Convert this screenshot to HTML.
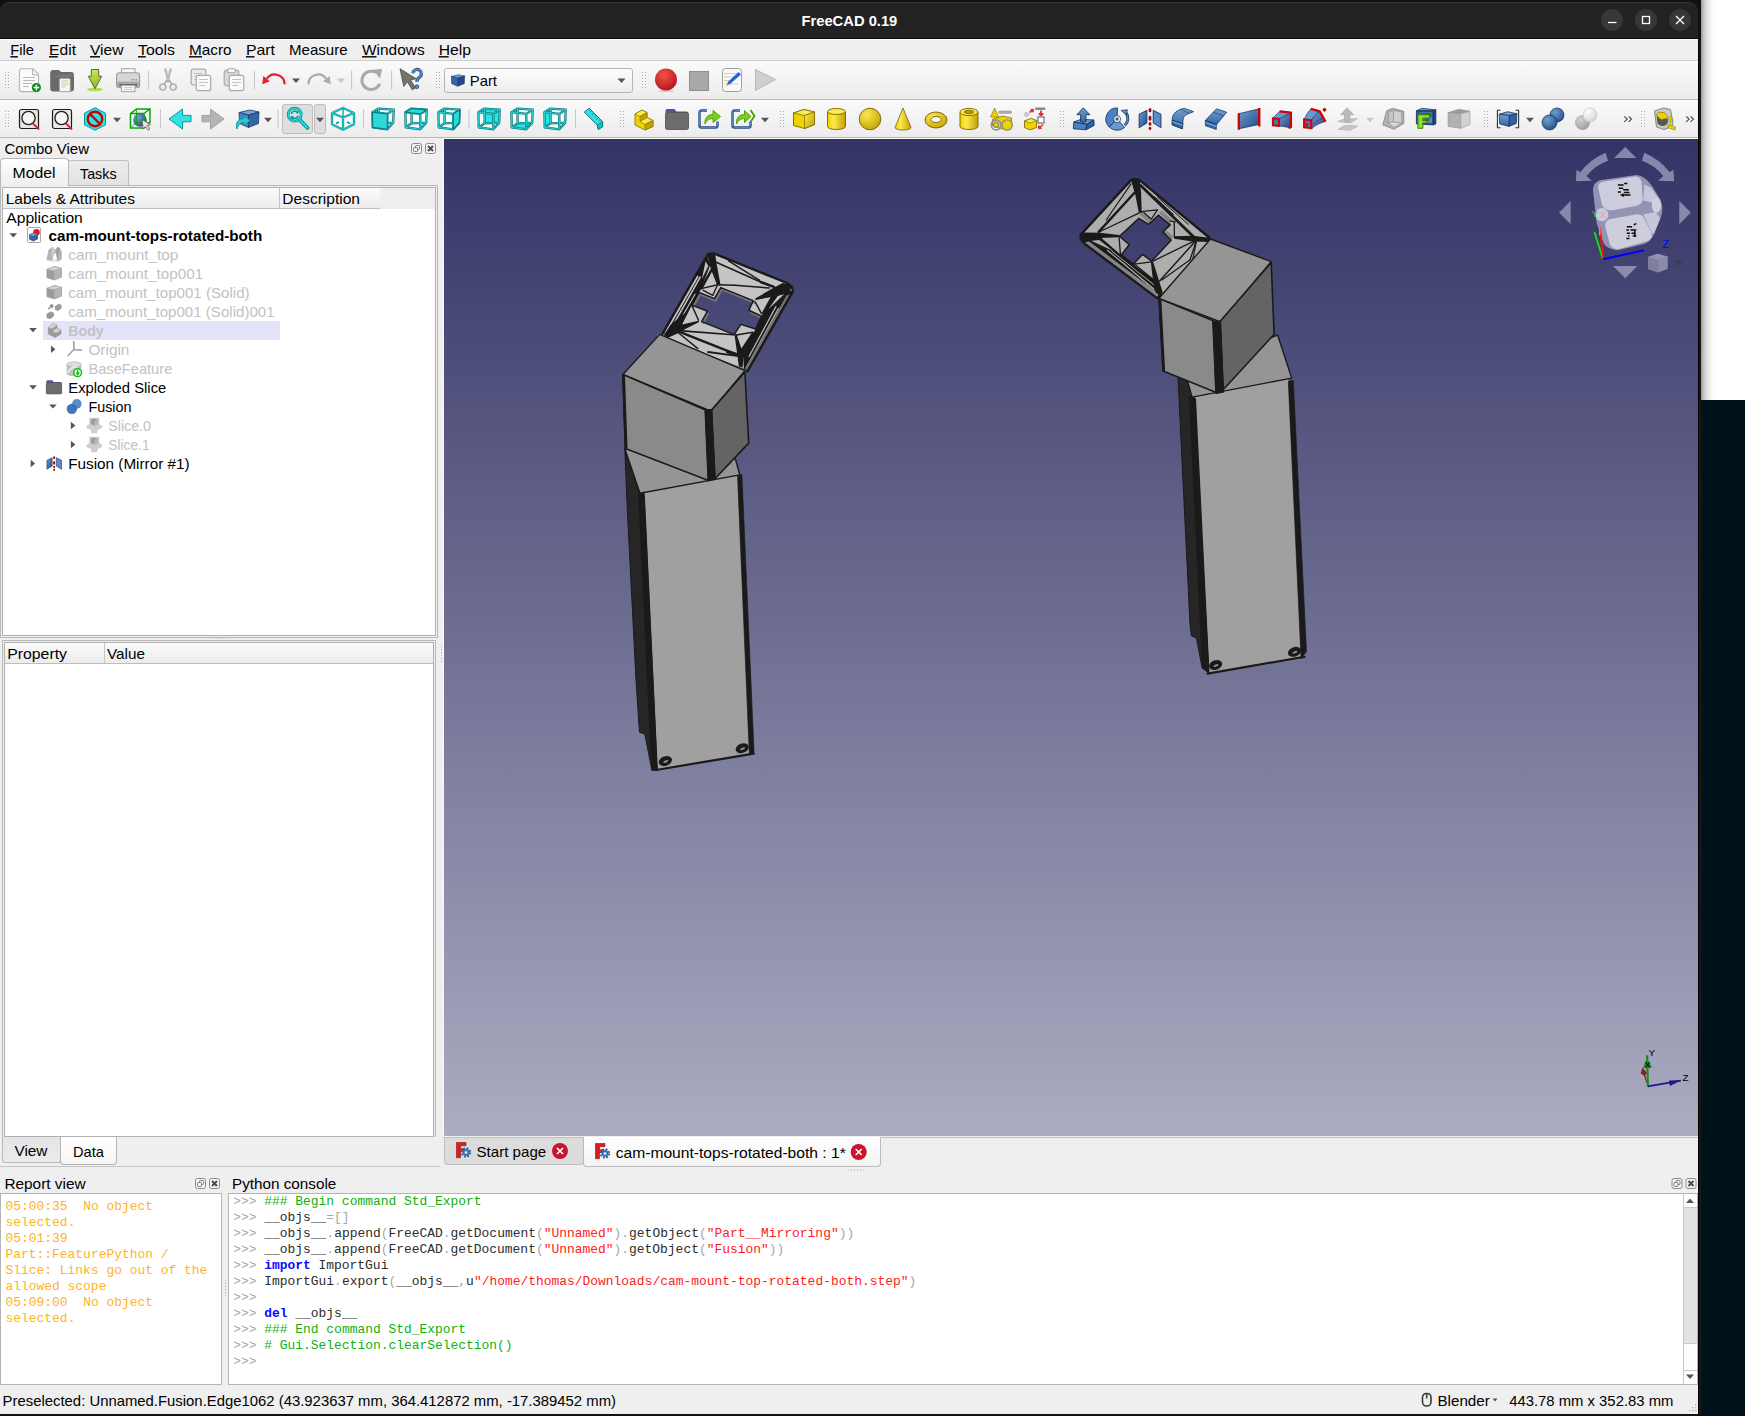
<!DOCTYPE html>
<html lang="en"><head><meta charset="utf-8"><title>FreeCAD 0.19</title>
<style>
html,body{margin:0;padding:0}
body{width:1745px;height:1416px;overflow:hidden;position:relative;background:#00121a;font-family:"Liberation Sans",sans-serif}
.a{position:absolute}
svg{position:absolute;left:0;top:0}
text{font-family:"Liberation Sans",sans-serif}
text.m{font-family:"Liberation Mono",monospace}
</style></head><body>
<div class="a" style="left:1701px;top:0;width:44px;height:400px;background:linear-gradient(to right,#9a9a9a 0,#c9c9c9 3px,#e6e6e6 7px,#f8f8f8 11px,#fff 16px)"></div>
<div class="a" style="left:1701px;top:400px;width:44px;height:1016px;background:#00121a"></div>
<div class="a" style="left:1698px;top:0;width:3px;height:1416px;background:#181815"></div>
<div class="a" style="left:1698px;top:0;width:1px;height:1416px;background:#000"></div>
<div class="a" style="left:0;top:0;width:1701px;height:40px;background:#111"></div>
<div class="a" style="left:0;top:2px;width:1698px;height:36px;background:#222;border-radius:10px 10px 0 0;box-shadow:inset 0 1px 0 #343434"></div>
<div class="a" style="left:0;top:38px;width:1698px;height:1px;background:#0a0a0a"></div>
<div class="a" style="left:1601px;top:9px;width:22px;height:22px;border-radius:11px;background:#373737"></div>
<div class="a" style="left:1635px;top:9px;width:22px;height:22px;border-radius:11px;background:#373737"></div>
<div class="a" style="left:1669px;top:9px;width:22px;height:22px;border-radius:11px;background:#373737"></div>
<div class="a" style="left:0;top:39px;width:1698px;height:1375px;background:#efefef"></div>
<div class="a" style="left:0;top:39px;width:1698px;height:1px;background:#fbfbfb"></div>
<div class="a" style="left:0;top:1414px;width:1701px;height:2px;background:#111"></div>
<div class="a" style="left:0;top:60px;width:1698px;height:1px;background:#cfcfcf"></div>
<div class="a" style="left:0;top:61px;width:1698px;height:38px;background:linear-gradient(#fafafa,#ececec)"></div>
<div class="a" style="left:0;top:99px;width:1698px;height:1px;background:#b9b9b9"></div>
<div class="a" style="left:0;top:100px;width:1698px;height:37px;background:linear-gradient(#fafafa,#ececec)"></div>
<div class="a" style="left:0;top:137px;width:1698px;height:1px;background:#b9b9b9"></div>
<div class="a" style="left:444px;top:68px;width:189px;height:25px;box-sizing:border-box;border:1px solid #b4b4b4;border-radius:3px;background:linear-gradient(#fdfdfd,#ededed)"></div>
<div class="a" style="left:282px;top:104px;width:31px;height:30px;box-sizing:border-box;border:1px solid #bdbdbd;border-radius:3px;background:#dedede"></div>
<div class="a" style="left:314px;top:104px;width:12px;height:30px;box-sizing:border-box;border:1px solid #bdbdbd;border-radius:3px;background:#dedede"></div>
<div class="a" style="left:0px;top:185px;width:438px;height:453px;box-sizing:border-box;border:1px solid #b9b9b9;background:#efefef"></div>
<div class="a" style="left:68px;top:160px;width:61px;height:25px;box-sizing:border-box;border:1px solid #bfbfbf;border-bottom:none;border-radius:3px 3px 0 0;background:linear-gradient(#ececec,#e2e2e2)"></div>
<div class="a" style="left:0px;top:158px;width:69px;height:28px;box-sizing:border-box;border:1px solid #b9b9b9;border-bottom:none;border-radius:4px 4px 0 0;background:linear-gradient(#fff,#f3f3f3 60%,#efefef)"></div>
<div class="a" style="left:2px;top:187px;width:434px;height:449px;box-sizing:border-box;border:1px solid #b0b0b0;background:#fff"></div>
<div class="a" style="left:3px;top:188px;width:432px;height:21px;background:#efefef"></div>
<div class="a" style="left:3px;top:188px;width:377px;height:21px;box-sizing:border-box;border-bottom:1px solid #bdbdbd;background:linear-gradient(#fbfbfb,#ececec)"></div>
<div class="a" style="left:279px;top:188px;width:1px;height:20px;background:#c4c4c4"></div>
<div class="a" style="left:43px;top:321px;width:237px;height:19px;background:#e3e3fa"></div>
<div class="a" style="left:2px;top:640px;width:434px;height:497px;box-sizing:border-box;border:1px solid #b9b9b9;border-bottom:none;background:#efefef"></div>
<div class="a" style="left:4px;top:642px;width:430px;height:495px;box-sizing:border-box;border:1px solid #b0b0b0;background:#fff"></div>
<div class="a" style="left:5px;top:643px;width:428px;height:21px;box-sizing:border-box;border-bottom:1px solid #bdbdbd;background:linear-gradient(#fbfbfb,#ececec)"></div>
<div class="a" style="left:104px;top:643px;width:1px;height:20px;background:#c4c4c4"></div>
<div class="a" style="left:2px;top:1137px;width:59px;height:26px;box-sizing:border-box;border:1px solid #b8b8b8;border-top:none;border-radius:0 0 3px 3px;background:linear-gradient(#e4e4e4,#ebebeb)"></div>
<div class="a" style="left:60px;top:1137px;width:57px;height:28px;box-sizing:border-box;border:1px solid #b4b4b4;border-top:none;border-radius:0 0 4px 4px;background:linear-gradient(#fff,#f6f6f6)"></div>
<div class="a" style="left:0;top:1166px;width:440px;height:1px;background:#c6c6c6"></div>
<div class="a" style="left:443px;top:138px;width:1255px;height:998px;background:#fbfbf8"></div>
<div class="a" style="left:444px;top:139px;width:1254px;height:997px;background:linear-gradient(#333366,#ababc1)"></div>
<div class="a" style="left:443px;top:1137px;width:1255px;height:1px;background:#c0c0c0"></div>
<div class="a" style="left:444px;top:1138px;width:140px;height:27px;box-sizing:border-box;border:1px solid #bdbdbd;border-top:none;border-radius:0 0 4px 4px;background:#dcdcdc"></div>
<div class="a" style="left:583px;top:1137px;width:298px;height:30px;box-sizing:border-box;border:1px solid #bdbdbd;border-top:none;border-radius:0 0 4px 4px;background:linear-gradient(#fff,#f4f4f4)"></div>
<div class="a" style="left:0px;top:1193px;width:222px;height:192px;box-sizing:border-box;border:1px solid #b4b4b4;background:#fff"></div>
<div class="a" style="left:228px;top:1193px;width:1470px;height:192px;box-sizing:border-box;border:1px solid #b4b4b4;background:#fff"></div>
<div class="a" style="left:1683px;top:1194px;width:14px;height:190px;box-sizing:border-box;border-left:1px solid #c8c8c8;background:#fdfdfd"></div>
<div class="a" style="left:1684px;top:1207px;width:13px;height:137px;box-sizing:border-box;border-top:1px solid #c8c8c8;border-bottom:1px solid #c8c8c8;background:#e2e2e2"></div>
<div class="a" style="left:1684px;top:1370px;width:13px;height:1px;background:#c8c8c8"></div>
<svg width="1745" height="1416" viewBox="0 0 1745 1416">
<g id="models"><polygon points="624.8,449 627.3,510 636,680 638.8,722.7 639.6,732.3 644.8,734.1 651.9,770.3 657.6,770 646,490 640,480" fill="#262626" stroke="#1a1a1a" stroke-width="1" stroke-linejoin="round"/>
<polygon points="644.3,490 737.7,470 749.8,754 657.6,769.5" fill="#a0a0a0"/>
<polygon points="638.1,492.5 644.8,494.6 657.8,770 651.2,770.3" fill="#1a1a1a"/>
<polygon points="737.5,475 741.9,474.3 754.1,753.2 749.3,754.4" fill="#1a1a1a" stroke="#1a1a1a" stroke-width="0.6" stroke-linejoin="round"/>
<line x1="656" y1="770" x2="753.6" y2="753.6" stroke="#1a1a1a" stroke-width="2.2" stroke-linecap="round"/>
<ellipse cx="665.4" cy="761" rx="6.8" ry="4.7" fill="#1a1a1a" transform="rotate(-20 665.4 761)"/>
<ellipse cx="665.6" cy="761.6" rx="2.6" ry="1.1" fill="#8f8f8f" transform="rotate(-20 665.4 761)"/>
<ellipse cx="742.2" cy="748.2" rx="6.8" ry="4.7" fill="#1a1a1a" transform="rotate(-20 742.2 748.2)"/>
<ellipse cx="742.4" cy="748.8" rx="2.6" ry="1.1" fill="#8f8f8f" transform="rotate(-20 742.2 748.2)"/>
<polygon points="624.8,448.8 735.4,459 739.8,474.9 640,493.3" fill="#959595" stroke="#1a1a1a" stroke-width="1.4" stroke-linejoin="round"/>
<path d="M706.9 255.8 L709.3 253.6 L714.3 253.6 L787.0 283.0 L791.9 287.0 L792.9 291.4 L747.4 371.5 L743.9 368.6 L656.9 334.9 L662.4 333.9 Z M720.8 287.6 L753.2 300.6 L748.9 310.2 L761.5 316.1 L755.6 329.0 L740.8 324.4 L734.1 334.6 L701.6 321.6 L707.4 311.3 L692.0 305.1 L699.1 292.4 L714.5 298.6 Z" fill="#c4c4c4" fill-rule="evenodd"/>
<polygon points="720.8,287.6 753.2,300.6 755.4,304.2 722.9,291.1" fill="#747474"/>
<polygon points="714.5,298.6 720.8,287.6 722.5,290.4 716.3,301.5" fill="#747474"/>
<polygon points="692.0,305.1 699.1,292.4 700.9,295.3 693.8,307.9" fill="#747474"/>
<polygon points="701.6,321.6 707.4,311.3 709.1,314.1 703.4,324.4" fill="#747474"/>
<polygon points="699.1,292.4 714.5,298.6 716.7,302.2 701.3,296.0" fill="#747474"/>
<polygon points="748.9,310.2 761.5,316.1 763.7,319.7 751.1,313.8" fill="#747474"/>
<path d="M720.8 287.6 L753.2 300.6 L748.9 310.2 L761.5 316.1 L755.6 329.0 L740.8 324.4 L734.1 334.6 L701.6 321.6 L707.4 311.3 L692.0 305.1 L699.1 292.4 L714.5 298.6 Z" fill="none" stroke="#1a1a1a" stroke-width="1.5" stroke-linejoin="round" stroke-linecap="round"/>
<polygon points="706.9,255.8 710.3,264.7 701.4,288.5 699.1,292.4 692.0,305.1 679.7,329.0 662.4,333.9" fill="#1a1a1a"/>
<polygon points="792.4,291.4 788.4,289.4 772.6,295.4 761.5,316.1 755.6,329.0 743.0,351.7 743.9,368.6 747.4,371.5" fill="#1a1a1a"/>
<polygon points="705.6,261.3 708.3,265.9 701.9,279.1" fill="#c4c4c4"/>
<line x1="697.9" y1="276.1" x2="665.4" y2="332.8" stroke="#c4c4c4" stroke-width="1.98" stroke-linecap="butt"/>
<line x1="700.5" y1="276.7" x2="673.9" y2="323.7" stroke="#c4c4c4" stroke-width="1.54" stroke-linecap="butt"/>
<line x1="695.3" y1="293.7" x2="681.5" y2="317.7" stroke="#c4c4c4" stroke-width="1.1" stroke-linecap="butt"/>
<polygon points="778.0,295.8 785.5,293.0 768.5,309.0" fill="#c4c4c4"/>
<line x1="776.1" y1="306.3" x2="748.9" y2="356.7" stroke="#c4c4c4" stroke-width="1.21" stroke-linecap="butt"/>
<line x1="778.6" y1="308.2" x2="746.4" y2="367.6" stroke="#c4c4c4" stroke-width="1.21" stroke-linecap="butt"/>
<line x1="773.6" y1="323.1" x2="749.9" y2="367.6" stroke="#c4c4c4" stroke-width="1.1" stroke-linecap="butt"/>
<polygon points="786.5,295.6 790.2,294.2 748.9,370.3 744.9,368.6" fill="#747474"/>
<path d="M662.4 333.9 L706.9 255.8 L709.3 253.6 L714.3 253.6 L787.0 283.0 L791.9 287.0 L792.9 291.4 L747.4 371.5" fill="none" stroke="#1a1a1a" stroke-width="2.4" stroke-linejoin="round" stroke-linecap="round"/>
<polygon points="707.0,253.5 715.2,254.3 716.5,263.3 720.6,285.3 717.2,285.3 710.8,269.0" fill="#1a1a1a"/>
<line x1="716.2" y1="262.3" x2="761.2" y2="282.2" stroke="#1a1a1a" stroke-width="1.5" stroke-linecap="round"/>
<line x1="761.2" y1="282.2" x2="773.8" y2="286.9" stroke="#1a1a1a" stroke-width="2.6" stroke-linecap="round"/>
<line x1="728.5" y1="260.8" x2="759.7" y2="280.4" stroke="#1a1a1a" stroke-width="1.4" stroke-linecap="round"/>
<line x1="701.0" y1="288.6" x2="717.7" y2="284.8" stroke="#1a1a1a" stroke-width="1.4" stroke-linecap="round"/>
<line x1="717.7" y1="284.8" x2="734.8" y2="285.3" stroke="#1a1a1a" stroke-width="1.4" stroke-linecap="round"/>
<line x1="734.8" y1="285.3" x2="769.4" y2="288.0" stroke="#1a1a1a" stroke-width="1.5" stroke-linecap="round"/>
<line x1="702.9" y1="290.1" x2="712.7" y2="295.4" stroke="#1a1a1a" stroke-width="1.3" stroke-linecap="round"/>
<line x1="717.1" y1="286.0" x2="712.7" y2="295.4" stroke="#1a1a1a" stroke-width="1.3" stroke-linecap="round"/>
<line x1="711.4" y1="270.2" x2="701.7" y2="287.9" stroke="#1a1a1a" stroke-width="2.4" stroke-linecap="round"/>
<polygon points="791.5,286.6 789.3,293.2 777.9,295.7 755.6,300.0 755.2,298.6 771.3,289.1 782.7,283.1 789.0,284.1" fill="#1a1a1a"/>
<line x1="754.9" y1="301.4" x2="761.5" y2="313.7" stroke="#1a1a1a" stroke-width="1.4" stroke-linecap="round"/>
<line x1="772.6" y1="295.4" x2="763.1" y2="312.8" stroke="#1a1a1a" stroke-width="2.0" stroke-linecap="round"/>
<polygon points="681.5,315.8 670.8,324.6 663.8,335.3 667.6,337.9 679.0,332.8 685.3,329.0 699.1,322.1 698.5,320.8 682.1,324.6 687.8,310.8" fill="#1a1a1a"/>
<line x1="692.2" y1="306.0" x2="698.5" y2="320.2" stroke="#1a1a1a" stroke-width="1.5" stroke-linecap="round"/>
<line x1="682.1" y1="330.9" x2="736.3" y2="335.0" stroke="#1a1a1a" stroke-width="1.6" stroke-linecap="round"/>
<line x1="736.3" y1="335.0" x2="752.7" y2="332.2" stroke="#1a1a1a" stroke-width="1.5" stroke-linecap="round"/>
<line x1="680.2" y1="332.2" x2="737.6" y2="354.9" stroke="#1a1a1a" stroke-width="2.4" stroke-linecap="round"/>
<line x1="678.3" y1="332.8" x2="697.9" y2="348.6" stroke="#1a1a1a" stroke-width="1.4" stroke-linecap="round"/>
<line x1="708.0" y1="352.0" x2="736.9" y2="355.8" stroke="#1a1a1a" stroke-width="1.8" stroke-linecap="round"/>
<line x1="727.5" y1="351.7" x2="737.6" y2="354.9" stroke="#1a1a1a" stroke-width="3.2" stroke-linecap="round"/>
<polygon points="734.7,336.0 736.9,335.3 741.4,348.6 752.1,332.2 754.6,332.8 743.3,358.0 742.6,367.5 738.8,366.2 736.9,351.7" fill="#1a1a1a"/>
<polygon points="659.7,334.4 744.9,370.7 711.9,410 706.8,409.5 622.9,374.5" fill="#959595" stroke="#1a1a1a" stroke-width="1.4" stroke-linejoin="round"/>
<polygon points="622.9,374.5 705.5,410 708.5,480.5 625.4,448.5" fill="#8a8a8a" stroke="#1a1a1a" stroke-width="1.4" stroke-linejoin="round"/>
<polygon points="711.5,410.1 744.9,372 748.7,443.1 715,478.7" fill="#646464" stroke="#1a1a1a" stroke-width="1.6" stroke-linejoin="round"/>
<polygon points="704.9,409.4 711.9,410.1 715,479.4 708,480.8" fill="#1a1a1a" stroke="#1a1a1a" stroke-width="1" stroke-linejoin="round"/>
<line x1="623.5" y1="376" x2="626" y2="448" stroke="#1a1a1a" stroke-width="3" stroke-linecap="round"/>
<polygon points="1178,378 1190,624.2 1191.4,636 1196.5,638.2 1202,667.4 1209.3,673.4 1197,394 1193,374" fill="#262626" stroke="#1a1a1a" stroke-width="1" stroke-linejoin="round"/>
<polygon points="1194.6,394 1288.3,376 1301.7,659 1209.3,673.4" fill="#a0a0a0"/>
<polygon points="1188.8,396 1196,398.4 1209.5,673.6 1202,668.4" fill="#1a1a1a"/>
<polygon points="1288.3,381.3 1293.3,380.6 1306.5,651.5 1301,658.8" fill="#1a1a1a" stroke="#1a1a1a" stroke-width="0.6" stroke-linejoin="round"/>
<line x1="1207.5" y1="673.6" x2="1304.5" y2="656.8" stroke="#1a1a1a" stroke-width="2.2" stroke-linecap="round"/>
<ellipse cx="1215.6" cy="665" rx="6.8" ry="4.7" fill="#1a1a1a" transform="rotate(-20 1215.6 665)"/>
<ellipse cx="1215.8" cy="665.6" rx="2.6" ry="1.1" fill="#8f8f8f" transform="rotate(-20 1215.6 665)"/>
<ellipse cx="1294.5" cy="651.8" rx="6.8" ry="4.7" fill="#1a1a1a" transform="rotate(-20 1294.5 651.8)"/>
<ellipse cx="1294.7" cy="652.4" rx="2.6" ry="1.1" fill="#8f8f8f" transform="rotate(-20 1294.5 651.8)"/>
<polygon points="1185.1,372.4 1277.6,335.0 1291.7,378.1 1192.1,397.1" fill="#959595" stroke="#1a1a1a" stroke-width="1.4" stroke-linejoin="round"/>
<path d="M1131.0 180.1 L1134.5 179.2 L1138.9 179.6 L1209.5 237.8 L1210.4 242.1 L1160.5 295.5 L1157.0 298.1 L1084.2 243.4 L1080.6 238.6 L1080.8 234.6 Z M1119.5 236.3 L1138.9 218.3 L1148.6 224.4 L1158.3 215.2 L1170.2 224.9 L1162.7 231.9 L1171.1 240.3 L1151.7 261.1 L1142.4 254.4 L1133.2 264.2 L1121.3 254.9 L1129.2 244.7 Z" fill="#aeaeae" fill-rule="evenodd"/>
<polygon points="1139.4,214.4 1141.9,211.9 1152.0,219.3 1149.1,223.4" fill="#868686"/>
<polygon points="1159.0,213.1 1161.9,210.5 1172.3,220.0 1170.0,223.7" fill="#868686"/>
<polygon points="1162.2,231.8 1164.9,229.0 1173.2,236.6 1170.7,240.5" fill="#868686"/>
<path d="M1119.5 236.3 L1138.9 218.3 L1148.6 224.4 L1158.3 215.2 L1170.2 224.9 L1162.7 231.9 L1171.1 240.3 L1151.7 261.1 L1142.4 254.4 L1133.2 264.2 L1121.3 254.9 L1129.2 244.7 Z" fill="none" stroke="#1a1a1a" stroke-width="1.5" stroke-linejoin="round" stroke-linecap="round"/>
<polygon points="1083.3,236.8 1100.1,236.8 1120.4,254.4 1133.2,264.2 1153.0,279.2 1160.5,295.5 1157.0,298.1 1083.3,243.0" fill="#1a1a1a"/>
<polygon points="1091.2,240.8 1099.2,239.9 1113.3,250.9" fill="#aeaeae"/>
<line x1="1107.1" y1="250.0" x2="1153.9" y2="288.9" stroke="#aeaeae" stroke-width="1.1" stroke-linecap="butt"/>
<line x1="1111.5" y1="250.9" x2="1155.7" y2="286.2" stroke="#aeaeae" stroke-width="0.99" stroke-linecap="butt"/>
<line x1="1119.5" y1="259.7" x2="1156.6" y2="292.4" stroke="#aeaeae" stroke-width="0.99" stroke-linecap="butt"/>
<polygon points="1083.5,242.8 1087.9,240.5 1159.0,293.7 1156.6,298.6" fill="#868686"/>
<polygon points="1135.4,263.7 1142.9,255.8 1150.4,261.9" fill="#aeaeae"/>
<polygon points="1135.4,265.9 1150.8,263.7 1151.7,276.5" fill="#aeaeae"/>
<line x1="1140.7" y1="185.6" x2="1195.4" y2="238.6" stroke="#1a1a1a" stroke-width="2.8" stroke-linecap="round"/>
<line x1="1153.9" y1="196.6" x2="1173.3" y2="214.7" stroke="#1a1a1a" stroke-width="1.2" stroke-linecap="round"/>
<line x1="1157.4" y1="197.1" x2="1188.3" y2="224.4" stroke="#1a1a1a" stroke-width="1.0" stroke-linecap="round"/>
<polygon points="1131.0,180.1 1134.5,179.2 1139.8,179.6 1141.1,192.7 1141.7,213.0 1138.9,213.0 1135.4,195.3" fill="#1a1a1a"/>
<line x1="1131.0" y1="183.8" x2="1106.2" y2="220.0" stroke="#1a1a1a" stroke-width="1.2" stroke-linecap="round"/>
<line x1="1134.5" y1="192.7" x2="1098.7" y2="231.9" stroke="#1a1a1a" stroke-width="2.4" stroke-linecap="round"/>
<polygon points="1080.8,234.6 1083.3,232.4 1100.1,232.8 1119.0,235.0 1119.0,237.2 1100.1,238.1 1083.3,243.0 1080.6,238.6" fill="#1a1a1a"/>
<line x1="1100.1" y1="231.5" x2="1138.9" y2="213.1" stroke="#1a1a1a" stroke-width="1.3" stroke-linecap="round"/>
<line x1="1119.0" y1="235.9" x2="1120.4" y2="254.4" stroke="#1a1a1a" stroke-width="1.3" stroke-linecap="round"/>
<line x1="1140.7" y1="211.6" x2="1157.4" y2="209.9" stroke="#1a1a1a" stroke-width="1.3" stroke-linecap="round"/>
<line x1="1143.8" y1="212.5" x2="1150.8" y2="218.7" stroke="#1a1a1a" stroke-width="1.2" stroke-linecap="round"/>
<line x1="1157.4" y1="209.9" x2="1151.3" y2="219.1" stroke="#1a1a1a" stroke-width="1.2" stroke-linecap="round"/>
<line x1="1174.2" y1="221.8" x2="1174.4" y2="236.8" stroke="#1a1a1a" stroke-width="1.3" stroke-linecap="round"/>
<line x1="1170.2" y1="220.9" x2="1175.1" y2="221.8" stroke="#1a1a1a" stroke-width="1.3" stroke-linecap="round"/>
<polygon points="1173.8,236.3 1192.7,235.7 1209.5,237.8 1210.4,242.1 1192.7,241.4 1174.2,238.7" fill="#1a1a1a"/>
<line x1="1194.5" y1="240.8" x2="1153.0" y2="261.1" stroke="#1a1a1a" stroke-width="1.3" stroke-linecap="round"/>
<line x1="1195.4" y1="241.2" x2="1159.6" y2="280.9" stroke="#1a1a1a" stroke-width="1.5" stroke-linecap="round"/>
<line x1="1195.8" y1="242.1" x2="1190.1" y2="259.7" stroke="#1a1a1a" stroke-width="1.3" stroke-linecap="round"/>
<line x1="1196.3" y1="242.1" x2="1192.7" y2="259.7" stroke="#1a1a1a" stroke-width="1.2" stroke-linecap="round"/>
<line x1="1190.1" y1="259.7" x2="1161.9" y2="280.0" stroke="#1a1a1a" stroke-width="1.2" stroke-linecap="round"/>
<polygon points="1150.8,261.9 1153.0,261.5 1162.7,292.4 1160.1,295.5 1155.7,292.4 1153.0,280.0" fill="#1a1a1a"/>
<line x1="1134.5" y1="264.2" x2="1151.3" y2="261.9" stroke="#1a1a1a" stroke-width="1.3" stroke-linecap="round"/>
<line x1="1135.4" y1="265.0" x2="1153.0" y2="279.2" stroke="#1a1a1a" stroke-width="1.4" stroke-linecap="round"/>
<path d="M1160.5 295.5 L1157.0 298.1 L1084.2 243.4 L1080.6 238.6 L1080.8 234.6 L1131.0 180.1 L1134.5 179.2 L1138.9 179.6 L1209.5 237.8" fill="none" stroke="#1a1a1a" stroke-width="2.4" stroke-linejoin="round" stroke-linecap="round"/>
<polygon points="1210.5,239.0 1271.2,261.6 1220.7,321.6 1216.2,320.2 1159.0,298.3" fill="#959595" stroke="#1a1a1a" stroke-width="1.4" stroke-linejoin="round"/>
<polygon points="1159.0,298.7 1213.3,320.9 1216.2,392.5 1163.2,371.0" fill="#8a8a8a" stroke="#1a1a1a" stroke-width="1.4" stroke-linejoin="round"/>
<polygon points="1220.0,321.6 1271.2,262.5 1274.1,334.3 1223.2,389.7" fill="#646464" stroke="#1a1a1a" stroke-width="1.6" stroke-linejoin="round"/>
<polygon points="1212.6,320.9 1220.7,321.6 1223.5,392.2 1215.7,393.6" fill="#1a1a1a" stroke="#1a1a1a" stroke-width="1" stroke-linejoin="round"/>
<line x1="1159.9" y1="300.4" x2="1163.6" y2="370.3" stroke="#1a1a1a" stroke-width="3.0" stroke-linecap="round"/></g>
<g id="icons"><defs>
<linearGradient id="gY" x1="0" y1="0" x2="1" y2="1"><stop offset="0" stop-color="#fce94f"/><stop offset="1" stop-color="#c4a000"/></linearGradient>
<linearGradient id="gYv" x1="0" y1="0" x2="1" y2="0"><stop offset="0" stop-color="#edd400"/><stop offset="0.35" stop-color="#fce94f"/><stop offset="1" stop-color="#c4a000"/></linearGradient>
<linearGradient id="gB" x1="0" y1="0" x2="1" y2="1"><stop offset="0" stop-color="#729fcf"/><stop offset="1" stop-color="#204a87"/></linearGradient>
<linearGradient id="gB2" x1="0" y1="0" x2="0" y2="1"><stop offset="0" stop-color="#729fcf"/><stop offset="1" stop-color="#3465a4"/></linearGradient>
<linearGradient id="gG" x1="0" y1="0" x2="0" y2="1"><stop offset="0" stop-color="#d3d7cf"/><stop offset="1" stop-color="#888a85"/></linearGradient>
<linearGradient id="gGr" x1="0" y1="0" x2="0" y2="1"><stop offset="0" stop-color="#c8e85a"/><stop offset="1" stop-color="#8ab81f"/></linearGradient>
<radialGradient id="gR" cx="0.4" cy="0.3" r="0.8"><stop offset="0" stop-color="#f0553f"/><stop offset="1" stop-color="#b00d23"/></radialGradient>
<radialGradient id="gYs" cx="0.35" cy="0.3" r="0.8"><stop offset="0" stop-color="#fce94f"/><stop offset="1" stop-color="#c4a000"/></radialGradient>
<radialGradient id="gBs" cx="0.35" cy="0.3" r="0.8"><stop offset="0" stop-color="#729fcf"/><stop offset="1" stop-color="#204a87"/></radialGradient>
<radialGradient id="gWs" cx="0.35" cy="0.3" r="0.8"><stop offset="0" stop-color="#ffffff"/><stop offset="1" stop-color="#d0d0d0"/></radialGradient>
<radialGradient id="gGs" cx="0.35" cy="0.3" r="0.8"><stop offset="0" stop-color="#d0d0d0"/><stop offset="1" stop-color="#9a9a9a"/></radialGradient>
</defs>
<rect x="5.6" y="72.6" width="1" height="1" fill="#fff"/><rect x="5" y="72" width="1" height="1" fill="#ababab"/><rect x="8.6" y="72.6" width="1" height="1" fill="#fff"/><rect x="8" y="72" width="1" height="1" fill="#ababab"/><rect x="5.6" y="75.6" width="1" height="1" fill="#fff"/><rect x="5" y="75" width="1" height="1" fill="#ababab"/><rect x="8.6" y="75.6" width="1" height="1" fill="#fff"/><rect x="8" y="75" width="1" height="1" fill="#ababab"/><rect x="5.6" y="78.6" width="1" height="1" fill="#fff"/><rect x="5" y="78" width="1" height="1" fill="#ababab"/><rect x="8.6" y="78.6" width="1" height="1" fill="#fff"/><rect x="8" y="78" width="1" height="1" fill="#ababab"/><rect x="5.6" y="81.6" width="1" height="1" fill="#fff"/><rect x="5" y="81" width="1" height="1" fill="#ababab"/><rect x="8.6" y="81.6" width="1" height="1" fill="#fff"/><rect x="8" y="81" width="1" height="1" fill="#ababab"/><rect x="5.6" y="84.6" width="1" height="1" fill="#fff"/><rect x="5" y="84" width="1" height="1" fill="#ababab"/><rect x="8.6" y="84.6" width="1" height="1" fill="#fff"/><rect x="8" y="84" width="1" height="1" fill="#ababab"/><rect x="5.6" y="87.6" width="1" height="1" fill="#fff"/><rect x="5" y="87" width="1" height="1" fill="#ababab"/><rect x="8.6" y="87.6" width="1" height="1" fill="#fff"/><rect x="8" y="87" width="1" height="1" fill="#ababab"/>
<g transform="translate(17,68) scale(1)"><path d="M4.500 0.800h11.500l5.500 5.500v15.300a2 2 0 0 1-2 2h-15a2 2 0 0 1-2-2v-18.800a2 2 0 0 1 2-2z" fill="#fbfbfb" stroke="#b4b4b4" stroke-width="1.100"/><path d="M15.500 1v4a2 2 0 0 0 2 2h4" fill="#f1f1ee" stroke="#b4b4b4" stroke-width="1.100"/><path d="M6 9.500h12M6 12.500h12M6 15.500h9" stroke="#b9b9b9" stroke-width="1.100"/><path d="M6 18.500h6" stroke="#b9b9b9" stroke-width="1.100"/><circle cx="19.400" cy="19.500" r="4.600" fill="#0f8a1f"/><path d="M19.400 16.700v5.600M16.600 19.500h5.600" stroke="#fff" stroke-width="1.500"/></g>
<g transform="translate(50,68) scale(1)"><path d="M0.200 5a3 3 0 0 1 3-3h5.500l2.500 2h9.800a3 3 0 0 1 3 3v13.400a3 3 0 0 1-3 3h-17.800a3 3 0 0 1-3-3z" fill="#6a6a6a"/><path d="M0.600 9.500c2-2 6-1 9-3h14v2.500h-23z" fill="#7a7a7a"/><rect x="9.300" y="10.300" width="11" height="13.400" rx="1.500" fill="#f6f6f4" stroke="#9a9a9a" stroke-width="0.900"/><path d="M11.300 12.700h7M11.300 14.800h7M11.300 16.900h7M11.300 19h4" stroke="#cfc6a8" stroke-width="0.900"/></g>
<g transform="translate(83,68) scale(1)"><ellipse cx="12" cy="21.500" rx="8" ry="1.800" fill="#b4dc4c"/><path d="M8.300 1.500h7.400v6.800h3l-6.700 12.500-6.700-12.500h3z" fill="url(#gGr)" stroke="#4f5e22" stroke-width="0.900" stroke-linejoin="round"/></g>
<g transform="translate(116,68) scale(1)"><rect x="5.500" y="0.700" width="13.400" height="8" fill="#fbfbf9" stroke="#a8a8a8" stroke-width="1.100"/><rect x="0.600" y="4.800" width="23" height="15" rx="3" fill="#d6d6d6" stroke="#9a9a9a" stroke-width="1.100"/><path d="M1.200 13.500h21.800v3.500a2.400 2.400 0 0 1-2.400 2.400h-17a2.400 2.400 0 0 1-2.400-2.400z" fill="#a9a9a9"/><rect x="3.500" y="16.300" width="17.500" height="1.300" fill="#3a3a3a"/><rect x="5.500" y="17.300" width="13.400" height="6.300" fill="#fbfbf9" stroke="#a8a8a8" stroke-width="1.100"/><path d="M8 19.400h8.500M8 21.400h8.500" stroke="#c4c4c4"/><circle cx="16.300" cy="11.700" r="0.800" fill="#ee4a5a"/><circle cx="18.400" cy="11.700" r="0.800" fill="#f07a40"/><circle cx="20.500" cy="11.700" r="0.800" fill="#4ac04a"/></g>
<g transform="translate(156,68) scale(1)"><path d="M9.5 1.5l3 12M14.5 1.5l-3 12" stroke="#b9b9b9" stroke-width="2.4" stroke-linecap="round"/><path d="M11 12l-3.5 5M13 12l3.5 5" stroke="#b0b0b0" stroke-width="1.6"/><circle cx="6.8" cy="19" r="3" fill="none" stroke="#b0b0b0" stroke-width="1.6"/><circle cx="17.2" cy="19" r="3" fill="none" stroke="#b0b0b0" stroke-width="1.6"/></g>
<g transform="translate(189,68) scale(1)"><rect x="2.200" y="1.200" width="14.600" height="15.800" rx="2" fill="#ececec" stroke="#a9a9a9" stroke-width="1.200"/><path d="M5 5.500h9M5 8.500h3M5 11.500h3" stroke="#c4c4c4"/><rect x="7.300" y="7.300" width="14.400" height="15.300" rx="2" fill="#fafafa" stroke="#a9a9a9" stroke-width="1.200"/><path d="M10.200 11.500h8.800M10.200 14.500h8.800M10.200 17.500h5.800" stroke="#c0c0c0"/></g>
<g transform="translate(222,68) scale(1)"><rect x="2.200" y="2.200" width="14.600" height="15.600" rx="2.500" fill="#d9d9d9" stroke="#a9a9a9" stroke-width="1.200"/><rect x="5.500" y="0.800" width="8" height="4" rx="2" fill="#fafafa" stroke="#a9a9a9" stroke-width="1.100"/><rect x="7.300" y="7.300" width="14.400" height="15.300" rx="2" fill="#fafafa" stroke="#a9a9a9" stroke-width="1.200"/><path d="M10.200 11.500h8.800M10.200 14.500h8.800M10.200 17.500h5.800" stroke="#c0c0c0"/></g>
<g transform="translate(262,68) scale(1)"><path d="M22.600 16.300a9.800 9.800 0 0 0-17.800-5.600" fill="none" stroke="#ee1b2e" stroke-width="2.200"/><path d="M0.300 16.300l1-8.300 6.600 5.200z" fill="#ee1b2e"/></g>
<g transform="translate(307,68) scale(1)"><g transform="translate(24,0) scale(-1,1)"><path d="M22.600 16.300a9.800 9.800 0 0 0-17.800-5.600" fill="none" stroke="#ababab" stroke-width="2.200"/><path d="M0.300 16.300l1-8.300 6.600 5.200z" fill="#ababab"/></g></g>
<g transform="translate(359,68) scale(1)"><path d="M20.700 15.800a9.200 9.200 0 1 1-3.600-11.200" fill="none" stroke="#a8a8a8" stroke-width="3"/><path d="M13.800 1.800l9.200-0.800-2 9.400z" fill="#a8a8a8"/></g>
<g transform="translate(399,68) scale(1)"><path d="M1 0.800l3.800 17.600 3.500-4.600 5 8 3.200-2-5-7.800 5.600-1.300z" fill="#74746c" stroke="#4a4a46" stroke-width="0.800" stroke-linejoin="round"/><path d="M13.800 5.200a4.300 4.300 0 1 1 6.300 4.400c-1.900 1.100-2.200 2-2.200 4.400" fill="none" stroke="#204a87" stroke-width="3.200"/><path d="M13.800 5.200a4.300 4.300 0 1 1 6.300 4.400c-1.900 1.100-2.200 2-2.200 4.400" fill="none" stroke="#5b8bc9" stroke-width="1.700"/><circle cx="17.900" cy="18.700" r="1.900" fill="#5b8bc9" stroke="#204a87" stroke-width="0.800"/></g>
<g transform="translate(654,68) scale(1)"><ellipse cx="12" cy="23" rx="8" ry="1.2" fill="#d8b0b0" opacity="0.7"/><circle cx="12" cy="11.5" r="11" fill="url(#gR)"/></g>
<g transform="translate(687,68) scale(1)"><rect x="2.5" y="3.5" width="19" height="19" fill="#a8a8a8" stroke="#8f8f8f"/></g>
<g transform="translate(720,68) scale(1)"><rect x="2.5" y="0.5" width="19" height="23" rx="3" fill="#f8f8f8" stroke="#a0a0a0"/><path d="M4 5.5h14M4 9h10M4 12.5h8M4 16h14" stroke="#d8cfb0"/><path d="M18.5 4l2.5 2.5-11 9.5-3 1 .8-3z" fill="#2a5fd8"/><path d="M7 17l-1.8 1.6 2.4-.6z" fill="#e0a040"/></g>
<g transform="translate(753,68) scale(1)"><polygon points="2.5,1.5 22.5,11.5 2.5,22.5" fill="#cfcfcf" stroke="#b0b0b0" stroke-width="0.8"/></g>
<rect x="148.1" y="70.5" width="1" height="19" fill="#c6c6c6"/>
<rect x="254.0" y="70.5" width="1" height="19" fill="#c6c6c6"/>
<rect x="351.1" y="70.5" width="1" height="19" fill="#c6c6c6"/>
<rect x="391.1" y="70.5" width="1" height="19" fill="#c6c6c6"/>
<polygon points="292,78.5 300,78.5 296,83" fill="#555"/>
<polygon points="337,78.5 345,78.5 341,83" fill="#c8c8c8"/>
<polygon points="617.5,78.5 625.5,78.5 621.5,83" fill="#555"/>
<rect x="436.6" y="72.6" width="1" height="1" fill="#fff"/><rect x="436" y="72" width="1" height="1" fill="#ababab"/><rect x="439.6" y="72.6" width="1" height="1" fill="#fff"/><rect x="439" y="72" width="1" height="1" fill="#ababab"/><rect x="436.6" y="75.6" width="1" height="1" fill="#fff"/><rect x="436" y="75" width="1" height="1" fill="#ababab"/><rect x="439.6" y="75.6" width="1" height="1" fill="#fff"/><rect x="439" y="75" width="1" height="1" fill="#ababab"/><rect x="436.6" y="78.6" width="1" height="1" fill="#fff"/><rect x="436" y="78" width="1" height="1" fill="#ababab"/><rect x="439.6" y="78.6" width="1" height="1" fill="#fff"/><rect x="439" y="78" width="1" height="1" fill="#ababab"/><rect x="436.6" y="81.6" width="1" height="1" fill="#fff"/><rect x="436" y="81" width="1" height="1" fill="#ababab"/><rect x="439.6" y="81.6" width="1" height="1" fill="#fff"/><rect x="439" y="81" width="1" height="1" fill="#ababab"/><rect x="436.6" y="84.6" width="1" height="1" fill="#fff"/><rect x="436" y="84" width="1" height="1" fill="#ababab"/><rect x="439.6" y="84.6" width="1" height="1" fill="#fff"/><rect x="439" y="84" width="1" height="1" fill="#ababab"/><rect x="436.6" y="87.6" width="1" height="1" fill="#fff"/><rect x="436" y="87" width="1" height="1" fill="#ababab"/><rect x="439.6" y="87.6" width="1" height="1" fill="#fff"/><rect x="439" y="87" width="1" height="1" fill="#ababab"/>
<rect x="642.6" y="72.6" width="1" height="1" fill="#fff"/><rect x="642" y="72" width="1" height="1" fill="#ababab"/><rect x="645.6" y="72.6" width="1" height="1" fill="#fff"/><rect x="645" y="72" width="1" height="1" fill="#ababab"/><rect x="642.6" y="75.6" width="1" height="1" fill="#fff"/><rect x="642" y="75" width="1" height="1" fill="#ababab"/><rect x="645.6" y="75.6" width="1" height="1" fill="#fff"/><rect x="645" y="75" width="1" height="1" fill="#ababab"/><rect x="642.6" y="78.6" width="1" height="1" fill="#fff"/><rect x="642" y="78" width="1" height="1" fill="#ababab"/><rect x="645.6" y="78.6" width="1" height="1" fill="#fff"/><rect x="645" y="78" width="1" height="1" fill="#ababab"/><rect x="642.6" y="81.6" width="1" height="1" fill="#fff"/><rect x="642" y="81" width="1" height="1" fill="#ababab"/><rect x="645.6" y="81.6" width="1" height="1" fill="#fff"/><rect x="645" y="81" width="1" height="1" fill="#ababab"/><rect x="642.6" y="84.6" width="1" height="1" fill="#fff"/><rect x="642" y="84" width="1" height="1" fill="#ababab"/><rect x="645.6" y="84.6" width="1" height="1" fill="#fff"/><rect x="645" y="84" width="1" height="1" fill="#ababab"/><rect x="642.6" y="87.6" width="1" height="1" fill="#fff"/><rect x="642" y="87" width="1" height="1" fill="#ababab"/><rect x="645.6" y="87.6" width="1" height="1" fill="#fff"/><rect x="645" y="87" width="1" height="1" fill="#ababab"/>
<g transform="translate(449.996,71.996) scale(0.667)"><polygon points="2,6.500 13,4 22,6 11.500,9" fill="#729fcf" stroke="#1b3a6b" stroke-width="0.800"/><polygon points="2,6.500 11.500,9 11.500,21.500 2.500,17.500" fill="#3465a4" stroke="#1b3a6b" stroke-width="0.800"/><polygon points="11.500,9 22,6 21.500,17.500 11.500,21.500" fill="#204a87" stroke="#1b3a6b" stroke-width="0.800"/></g>
<rect x="5.6" y="111.6" width="1" height="1" fill="#fff"/><rect x="5" y="111" width="1" height="1" fill="#ababab"/><rect x="8.6" y="111.6" width="1" height="1" fill="#fff"/><rect x="8" y="111" width="1" height="1" fill="#ababab"/><rect x="5.6" y="114.6" width="1" height="1" fill="#fff"/><rect x="5" y="114" width="1" height="1" fill="#ababab"/><rect x="8.6" y="114.6" width="1" height="1" fill="#fff"/><rect x="8" y="114" width="1" height="1" fill="#ababab"/><rect x="5.6" y="117.6" width="1" height="1" fill="#fff"/><rect x="5" y="117" width="1" height="1" fill="#ababab"/><rect x="8.6" y="117.6" width="1" height="1" fill="#fff"/><rect x="8" y="117" width="1" height="1" fill="#ababab"/><rect x="5.6" y="120.6" width="1" height="1" fill="#fff"/><rect x="5" y="120" width="1" height="1" fill="#ababab"/><rect x="8.6" y="120.6" width="1" height="1" fill="#fff"/><rect x="8" y="120" width="1" height="1" fill="#ababab"/><rect x="5.6" y="123.6" width="1" height="1" fill="#fff"/><rect x="5" y="123" width="1" height="1" fill="#ababab"/><rect x="8.6" y="123.6" width="1" height="1" fill="#fff"/><rect x="8" y="123" width="1" height="1" fill="#ababab"/><rect x="5.6" y="126.6" width="1" height="1" fill="#fff"/><rect x="5" y="126" width="1" height="1" fill="#ababab"/><rect x="8.6" y="126.6" width="1" height="1" fill="#fff"/><rect x="8" y="126" width="1" height="1" fill="#ababab"/>
<g transform="translate(17,107) scale(1)"><rect x="2.5" y="2.5" width="19" height="19" rx="2" fill="#e8e6e0" stroke="#1c1c1c" stroke-width="1.2"/><circle cx="11.5" cy="11" r="6.6" fill="#f4f4f4" stroke="#1c1c1c" stroke-width="1.3"/><path d="M16 16.5l6 6" stroke="#e01b3c" stroke-width="1.8"/></g>
<g transform="translate(50,107) scale(1)"><rect x="2.5" y="2.5" width="19" height="19" rx="2" fill="#e8e6e0" stroke="#1c1c1c" stroke-width="1.2"/><circle cx="11.5" cy="11" r="6.6" fill="#f4f4f4" stroke="#1c1c1c" stroke-width="1.3"/><path d="M16 16.5l6 6" stroke="#e01b3c" stroke-width="1.8"/></g>
<g transform="translate(83,107) scale(1)"><polygon points="12,0.8 22.5,6.2 22.5,17.8 12,23.2 1.5,17.8 1.5,6.2" fill="#34e0e2" stroke="#06989a" stroke-width="1"/><circle cx="12" cy="12" r="7.2" fill="none" stroke="#cc0000" stroke-width="2.4"/><path d="M7 7l10 10" stroke="#cc0000" stroke-width="2.4"/></g>
<g transform="translate(128,107) scale(1)"><circle cx="12" cy="13" r="6.8" fill="url(#gBs)"/><path d="M2.5 6.5l6-4.5h13.5v13.5l-6 5.5h-13.5zM2.5 6.5h13.5v14.5M16 6.5l6-4.5" fill="none" stroke="#0aa40a" stroke-width="1.5"/><path d="M8.5 2v13.5h13.5M8.5 15.5l-6 5.5" fill="none" stroke="#0aa40a" stroke-width="0.8"/><path d="M14 12.5l1.2 9.5 2.3-2.4 2.6 3.6 1.8-1.3-2.6-3.5 3.2-.8z" fill="#e8e8e8" stroke="#555" stroke-width="0.8"/></g>
<g transform="translate(168,107) scale(1)"><path d="M1 12l13.500-10v6.400h8.500v6.400h-8.500v7.200z" fill="#34e0e2" stroke="#06989a" stroke-width="1"/></g>
<g transform="translate(201,107) scale(1)"><g transform="translate(24,0) scale(-1,1)"><path d="M1 12l13.500-10v6.400h8.500v6.400h-8.500v7.200z" fill="#b4b4b4" stroke="#a0a0a0" stroke-width="1"/></g></g>
<g transform="translate(234,107) scale(1)"><g transform="translate(3,-1)"><polygon points="2,6.500 13,4 22,6 11.500,9" fill="#7aa7d9" stroke="#1b3a6b" stroke-width="0.800"/><polygon points="2,6.500 11.500,9 11.500,21.500 2.500,17.500" fill="#4a82c8" stroke="#1b3a6b" stroke-width="0.800"/><polygon points="11.500,9 22,6 21.500,17.500 11.500,21.500" fill="#3465a4" stroke="#1b3a6b" stroke-width="0.800"/></g><path d="M3 22c-2-6 1-10.500 7-10.500v-3l6 5-6 5v-3c-3.500 0-5.500 2-7 6.500z" fill="#2cc8d6" stroke="#06989a" stroke-width="0.900"/></g>
<g transform="translate(286,107) scale(1)"><path d="M13.500 12.600l8 8.200" stroke="#06989a" stroke-width="3.800" stroke-linecap="round"/><path d="M13.800 12.900l7.600 7.800" stroke="#34e0e2" stroke-width="1.600" stroke-linecap="round"/><circle cx="8.700" cy="7.700" r="6.500" fill="#dff" fill-opacity="0.35" stroke="#06989a" stroke-width="2.800"/><circle cx="8.700" cy="7.700" r="6.500" fill="none" stroke="#34e0e2" stroke-width="1.100"/><path d="M5.300 7a3.600 3.600 0 0 1 6.300-1.600M12.100 8.500a3.600 3.600 0 0 1-6.300 1.600" fill="none" stroke="#06989a" stroke-width="1.700"/><path d="M12.600 3.200v3.200h-3.200zM4.800 12.200v-3.200h3.200z" fill="#06989a"/></g>
<g transform="translate(331,107) scale(1)"><path d="M12 1L23 6V17.300L12 22.800L1 17.300V6Z" fill="#fbfbfb"/><path d="M12 1L23 6V17.300L12 22.800L1 17.300V6ZM1 6L12 10.500L23 6M12 10.500V22.800" fill="none" stroke="#06989a" stroke-width="2.300" stroke-linejoin="round"/><path d="M12 1L23 6V17.300L12 22.800L1 17.300V6ZM1 6L12 10.500L23 6M12 10.500V22.800" fill="none" stroke="#34e0e2" stroke-width="0.800" stroke-linejoin="round"/><path d="M12 1.500v8.500" stroke="#06989a" stroke-width="1.300"/><path d="M5 16.500l3-1.500M19 16.500l-3-1.500" stroke="#06989a" stroke-width="1.600"/></g>
<g transform="translate(371,107) scale(1)"><polygon points="1.4,5.2 7.5,1.6 22.7,2.7 22.2,15.7 16.3,22.3 1.7,20.4" fill="#fbfbfb"/><path d="M1.4 5.2 L16.3 6.9 L16.3 22.3 L1.7 20.4ZM7.5 1.6 L22.7 2.7 L22.2 15.7 L7.6 16.3ZM1.4 5.2L7.5 1.6M16.3 6.9L22.7 2.7M16.3 22.3L22.2 15.7M1.7 20.4L7.6 16.3" fill="none" stroke="#05797b" stroke-width="2.3" stroke-linejoin="round"/><path d="M1.4 5.2 L16.3 6.9 L16.3 22.3 L1.7 20.4ZM7.5 1.6 L22.7 2.7 L22.2 15.7 L7.6 16.3ZM1.4 5.2L7.5 1.6M16.3 6.9L22.7 2.7M16.3 22.3L22.2 15.7M1.7 20.4L7.6 16.3" fill="none" stroke="#2ed8da" stroke-width="0.9" stroke-linejoin="round"/><polygon points="1.4,5.2 16.3,6.9 16.3,22.3 1.7,20.4" fill="#2ed8da" stroke="#05797b" stroke-width="1.100" stroke-linejoin="round"/></g>
<g transform="translate(404,107) scale(1)"><polygon points="1.4,5.2 7.5,1.6 22.7,2.7 22.2,15.7 16.3,22.3 1.7,20.4" fill="#fbfbfb"/><path d="M1.4 5.2 L16.3 6.9 L16.3 22.3 L1.7 20.4ZM7.5 1.6 L22.7 2.7 L22.2 15.7 L7.6 16.3ZM1.4 5.2L7.5 1.6M16.3 6.9L22.7 2.7M16.3 22.3L22.2 15.7M1.7 20.4L7.6 16.3" fill="none" stroke="#05797b" stroke-width="2.3" stroke-linejoin="round"/><path d="M1.4 5.2 L16.3 6.9 L16.3 22.3 L1.7 20.4ZM7.5 1.6 L22.7 2.7 L22.2 15.7 L7.6 16.3ZM1.4 5.2L7.5 1.6M16.3 6.9L22.7 2.7M16.3 22.3L22.2 15.7M1.7 20.4L7.6 16.3" fill="none" stroke="#2ed8da" stroke-width="0.9" stroke-linejoin="round"/><polygon points="1.4,5.2 16.3,6.9 22.7,2.7 7.5,1.6" fill="#2ed8da" stroke="#05797b" stroke-width="1.100" stroke-linejoin="round"/></g>
<g transform="translate(437,107) scale(1)"><polygon points="1.4,5.2 7.5,1.6 22.7,2.7 22.2,15.7 16.3,22.3 1.7,20.4" fill="#fbfbfb"/><path d="M1.4 5.2 L16.3 6.9 L16.3 22.3 L1.7 20.4ZM7.5 1.6 L22.7 2.7 L22.2 15.7 L7.6 16.3ZM1.4 5.2L7.5 1.6M16.3 6.9L22.7 2.7M16.3 22.3L22.2 15.7M1.7 20.4L7.6 16.3" fill="none" stroke="#05797b" stroke-width="2.3" stroke-linejoin="round"/><path d="M1.4 5.2 L16.3 6.9 L16.3 22.3 L1.7 20.4ZM7.5 1.6 L22.7 2.7 L22.2 15.7 L7.6 16.3ZM1.4 5.2L7.5 1.6M16.3 6.9L22.7 2.7M16.3 22.3L22.2 15.7M1.7 20.4L7.6 16.3" fill="none" stroke="#2ed8da" stroke-width="0.9" stroke-linejoin="round"/><polygon points="16.3,6.9 22.7,2.7 22.2,15.7 16.3,22.3" fill="#2ed8da" stroke="#05797b" stroke-width="1.100" stroke-linejoin="round"/></g>
<g transform="translate(477,107) scale(1)"><polygon points="1.4,5.2 7.5,1.6 22.7,2.7 22.2,15.7 16.3,22.3 1.7,20.4" fill="#fbfbfb"/><polygon points="7.5,1.6 22.7,2.7 22.2,15.7 7.6,16.3" fill="#34e0e2"/><path d="M1.4 5.2 L16.3 6.9 L16.3 22.3 L1.7 20.4ZM7.5 1.6 L22.7 2.7 L22.2 15.7 L7.6 16.3ZM1.4 5.2L7.5 1.6M16.3 6.9L22.7 2.7M16.3 22.3L22.2 15.7M1.7 20.4L7.6 16.3" fill="none" stroke="#05797b" stroke-width="2.3" stroke-linejoin="round"/><path d="M1.4 5.2 L16.3 6.9 L16.3 22.3 L1.7 20.4ZM7.5 1.6 L22.7 2.7 L22.2 15.7 L7.6 16.3ZM1.4 5.2L7.5 1.6M16.3 6.9L22.7 2.7M16.3 22.3L22.2 15.7M1.7 20.4L7.6 16.3" fill="none" stroke="#2ed8da" stroke-width="0.9" stroke-linejoin="round"/></g>
<g transform="translate(510,107) scale(1)"><polygon points="1.4,5.2 7.5,1.6 22.7,2.7 22.2,15.7 16.3,22.3 1.7,20.4" fill="#fbfbfb"/><polygon points="1.7,20.4 16.3,22.3 22.2,15.7 7.6,16.3" fill="#34e0e2"/><path d="M1.4 5.2 L16.3 6.9 L16.3 22.3 L1.7 20.4ZM7.5 1.6 L22.7 2.7 L22.2 15.7 L7.6 16.3ZM1.4 5.2L7.5 1.6M16.3 6.9L22.7 2.7M16.3 22.3L22.2 15.7M1.7 20.4L7.6 16.3" fill="none" stroke="#05797b" stroke-width="2.3" stroke-linejoin="round"/><path d="M1.4 5.2 L16.3 6.9 L16.3 22.3 L1.7 20.4ZM7.5 1.6 L22.7 2.7 L22.2 15.7 L7.6 16.3ZM1.4 5.2L7.5 1.6M16.3 6.9L22.7 2.7M16.3 22.3L22.2 15.7M1.7 20.4L7.6 16.3" fill="none" stroke="#2ed8da" stroke-width="0.9" stroke-linejoin="round"/></g>
<g transform="translate(543,107) scale(1)"><polygon points="1.4,5.2 7.5,1.6 22.7,2.7 22.2,15.7 16.3,22.3 1.7,20.4" fill="#fbfbfb"/><polygon points="1.4,5.2 7.5,1.6 7.6,16.3 1.7,20.4" fill="#34e0e2"/><path d="M1.4 5.2 L16.3 6.9 L16.3 22.3 L1.7 20.4ZM7.5 1.6 L22.7 2.7 L22.2 15.7 L7.6 16.3ZM1.4 5.2L7.5 1.6M16.3 6.9L22.7 2.7M16.3 22.3L22.2 15.7M1.7 20.4L7.6 16.3" fill="none" stroke="#05797b" stroke-width="2.3" stroke-linejoin="round"/><path d="M1.4 5.2 L16.3 6.9 L16.3 22.3 L1.7 20.4ZM7.5 1.6 L22.7 2.7 L22.2 15.7 L7.6 16.3ZM1.4 5.2L7.5 1.6M16.3 6.9L22.7 2.7M16.3 22.3L22.2 15.7M1.7 20.4L7.6 16.3" fill="none" stroke="#2ed8da" stroke-width="0.9" stroke-linejoin="round"/></g>
<g transform="translate(582,107) scale(1)"><polygon points="2.300,5 7.200,1.200 20.600,14.800 20.600,19.800 16.300,22.400 15.200,18.100" fill="#34e0e2" stroke="#05797b" stroke-width="1"/><polygon points="20.600,14.800 20.600,19.800 16.300,22.400 15.200,18.100" fill="#16c0c4" stroke="#05797b" stroke-width="0.800"/><path d="M9.500 3.600l-1.500 1.500M11.800 5.900l-2.300 2.200M14.100 8.200l-1.500 1.500M16.400 10.500l-2.300 2.200M18.700 12.800l-1.500 1.500" stroke="#05797b" stroke-width="0.900"/></g>
<g transform="translate(632,107) scale(1)"><polygon points="3,7 10,3 15,5.5 15,10.5 21,13.5 21,19.5 13,23 3,18" fill="#edd400" stroke="#8f7a00" stroke-width="0.9"/><polygon points="3,7 10,3 15,5.5 8,9.5" fill="#fce94f" stroke="#8f7a00" stroke-width="0.7"/><polygon points="8,9.5 15,5.5 15,10.5 8,14.5" fill="#c4a000" stroke="#8f7a00" stroke-width="0.7"/><polygon points="8,14.5 15,10.5 21,13.5 13,17.5" fill="#fce94f" stroke="#8f7a00" stroke-width="0.7"/><polygon points="13,17.5 21,13.5 21,19.5 13,23" fill="#c4a000" stroke="#8f7a00" stroke-width="0.7"/></g>
<g transform="translate(665,107) scale(1)"><path d="M0.5 4a2 2 0 0 1 2-2h7l2 2.5h10a2 2 0 0 1 2 2v14a2 2 0 0 1-2 2h-19a2 2 0 0 1-2-2z" fill="#5b4f9e"/><path d="M0.5 7.5a2 2 0 0 1 2-2h19a2 2 0 0 1 2 2v13a2 2 0 0 1-2 2h-19a2 2 0 0 1-2-2z" fill="#6c6c6c" stroke="#555" stroke-width="0.8"/></g>
<g transform="translate(698,107) scale(1)"><path d="M9 3.5h-5.5a2 2 0 0 0-2 2v13a2 2 0 0 0 2 2h14a2 2 0 0 0 2-2v-4" fill="none" stroke="#204a87" stroke-width="2.4"/><path d="M9 3.5h-5.5a2 2 0 0 0-2 2v13a2 2 0 0 0 2 2h14a2 2 0 0 0 2-2v-4" fill="none" stroke="#5a8ac8" stroke-width="0.9"/><path d="M7 17c-.5-6 2.5-9.5 8-9.5v-4l7.5 6-7.5 6v-4c-3.5 0-6 1.5-8 5.500z" fill="#73d216" stroke="#4e9a06" stroke-width="0.9"/></g>
<g transform="translate(731,107) scale(1)"><path d="M9 3.5h-5.5a2 2 0 0 0-2 2v13a2 2 0 0 0 2 2h14a2 2 0 0 0 2-2v-4" fill="none" stroke="#204a87" stroke-width="2.4"/><path d="M9 3.5h-5.5a2 2 0 0 0-2 2v13a2 2 0 0 0 2 2h14a2 2 0 0 0 2-2v-4" fill="none" stroke="#5a8ac8" stroke-width="0.9"/><path d="M7 17c-.5-6 2.5-9.5 8-9.5v-4l6.5 6-6.5 6v-4c-3.5 0-6 1.5-8 5.500z" fill="#73d216" stroke="#4e9a06" stroke-width="0.9" transform="translate(-1.5,0)"/><path d="M19.5 3l4 6-4 6" fill="none" stroke="#4e9a06" stroke-width="1.8"/></g>
<g transform="translate(792,107) scale(1)"><polygon points="1.5,6 12,2.5 22.5,5 22.5,17.5 12.5,21.5 1.5,18.5" fill="#edd400" stroke="#756400" stroke-width="0.9"/><polygon points="1.5,6 12,2.5 22.5,5 12.5,8.5" fill="#fce94f" stroke="#756400" stroke-width="0.7"/><polygon points="12.5,8.5 22.5,5 22.5,17.5 12.5,21.5" fill="url(#gY)" stroke="#756400" stroke-width="0.7"/></g>
<g transform="translate(824.5,107) scale(1)"><path d="M3 4.500v15a9 3 0 0 0 18 0v-15" fill="url(#gYv)" stroke="#756400" stroke-width="0.9"/><ellipse cx="12" cy="4.5" rx="9" ry="3" fill="#fce94f" stroke="#756400" stroke-width="0.9"/></g>
<g transform="translate(858,107) scale(1)"><circle cx="12" cy="12" r="10.8" fill="url(#gYs)" stroke="#756400" stroke-width="0.9"/></g>
<g transform="translate(891,107) scale(1)"><path d="M12 1l8 19.500a8 2.5 0 0 1-16 0z" fill="url(#gYv)" stroke="#756400" stroke-width="0.8"/></g>
<g transform="translate(924,107) scale(1)"><ellipse cx="12" cy="13" rx="11" ry="8" fill="url(#gYs)" stroke="#756400" stroke-width="0.9"/><ellipse cx="12" cy="12.5" rx="5.2" ry="3" fill="#f4f4f4" stroke="#756400" stroke-width="0.9"/></g>
<g transform="translate(957,107) scale(1)"><path d="M3 5v14.500a9 3 0 0 0 18 0v-14.5" fill="url(#gYv)" stroke="#756400" stroke-width="0.9"/><ellipse cx="12" cy="5" rx="9" ry="3.6" fill="#fce94f" stroke="#756400" stroke-width="0.9"/><ellipse cx="12" cy="5" rx="4.8" ry="1.8" fill="#b89600" stroke="#756400" stroke-width="0.7"/></g>
<g transform="translate(989.6,107) scale(1)"><polygon points="5,1 9,10 1,10" fill="#edd400" stroke="#756400" stroke-width="0.6"/><rect x="9" y="4" width="13" height="2.4" rx="1.2" fill="#b0b0b0" stroke="#888" stroke-width="0.5"/><polygon points="3,12 13,9 22,11 22,19 12,22 3,19" fill="#edd400" stroke="#756400" stroke-width="0.7"/><circle cx="6.5" cy="18" r="5" fill="none" stroke="#8a8a8a" stroke-width="1.3"/><circle cx="6.5" cy="18" r="2.5" fill="none" stroke="#8a8a8a" stroke-width="1.1"/><circle cx="17.5" cy="18" r="5.2" fill="#edd400" stroke="#8a8a8a" stroke-width="1.3"/></g>
<g transform="translate(1023,107) scale(1)"><polygon points="1.5,14 8,11.5 13.5,13.5 13.5,20.5 7,23 1.5,20.5" fill="#edd400" stroke="#756400" stroke-width="0.8"/><polygon points="1.5,14 8,11.5 13.5,13.5 7,16" fill="#fce94f" stroke="#756400" stroke-width="0.6"/><rect x="12" y="0.5" width="10.5" height="2.6" rx="1" fill="#8a8a8a"/><rect x="15" y="10" width="6" height="6" fill="#fff" stroke="#8a8a8a" stroke-width="1.5"/><polygon points="3.5,5 6,7.5 3.5,10 1,7.5" fill="#d0d0d0" stroke="#999" stroke-width="0.7"/><path d="M6.5 5.500l4-3M10.5 2.500l-3 .3M10.5 2.500l-.8 2.8" stroke="#ef2929" stroke-width="1.6"/><path d="M18 3.500v5M18 8.500l-2.2-2.200M18 8.500l2.2-2.2" stroke="#ef2929" stroke-width="1.8"/><path d="M20 17.500l-4.5 4M15.5 21.500l3.2-.2M15.5 21.500l.4-3" stroke="#ef2929" stroke-width="1.6"/></g>
<g transform="translate(1072,107) scale(1)"><polygon points="1.8,15 9,12.3 21.8,13 14.9,17.4" fill="#729fcf" stroke="#0b2a57" stroke-width="0.8" stroke-linejoin="round"/><polygon points="1.8,15 14.9,17.4 14,22.8 1.3,21.8" fill="#4a82c8" stroke="#0b2a57" stroke-width="0.8" stroke-linejoin="round"/><polygon points="14.9,17.4 21.8,13 22.2,18.4 14,22.8" fill="#2f5fa5" stroke="#0b2a57" stroke-width="0.8" stroke-linejoin="round"/><path d="M11.3 0.8l6.600 6.900h-3.900v6.800l-2.700 1-2.700-1v-6.800h-3.700z" fill="url(#gB2)" stroke="#0b2a57" stroke-width="0.8" stroke-linejoin="round"/></g>
<g transform="translate(1105,107) scale(1)"><path d="M12.1 12.1L12.49 0.91A11.2 11.2 0 0 0 4.18 20.02Z" fill="#4a82c8" stroke="#0b2a57" stroke-width="0.8" stroke-linejoin="round"/><path d="M12.1 12.1L4.18 20.02A11.2 11.2 0 0 0 19.59 20.42Z" fill="#6a9ad4" stroke="#0b2a57" stroke-width="0.8" stroke-linejoin="round"/><circle cx="12.1" cy="12.1" r="3.5" fill="#f4f4f4" stroke="#0b2a57" stroke-width="0.7"/><circle cx="12.1" cy="12.1" r="1.3" fill="#3f76bd" stroke="#0b2a57" stroke-width="0.5"/><path d="M19.8 18.4a9.6 9.6 0 0 0 1-13" fill="none" stroke="#0b2a57" stroke-width="2.8"/><path d="M19.8 18.400a9.600 9.600 0 0 0 1-13" fill="none" stroke="#5b8bc9" stroke-width="1.500"/><path d="M16.200 3.400l6.200-0.600-1.200 5.600z" fill="#5b8bc9" stroke="#0b2a57" stroke-width="0.700" stroke-linejoin="round"/></g>
<g transform="translate(1138,107) scale(1)"><polygon points="1.1,7.2 8.900,3.300 8.900,15.900 1.100,20.800" fill="url(#gB)" stroke="#0b2a57" stroke-width="0.800" stroke-linejoin="round"/><polygon points="23,7.2 15.200,3.300 15.200,15.900 23,20.800" fill="#5b8bc9" stroke="#0b2a57" stroke-width="0.800" stroke-linejoin="round"/><path d="M12 2.60V3.90" stroke="#7a0000" stroke-width="2.700" stroke-linecap="round"/><path d="M12 2.60V3.90" stroke="#d40000" stroke-width="1.700" stroke-linecap="round"/><path d="M12 10.10V12.30" stroke="#7a0000" stroke-width="2.700" stroke-linecap="round"/><path d="M12 10.10V12.30" stroke="#d40000" stroke-width="1.700" stroke-linecap="round"/><path d="M12 16.70V17.30" stroke="#7a0000" stroke-width="2.700" stroke-linecap="round"/><path d="M12 16.70V17.30" stroke="#d40000" stroke-width="1.700" stroke-linecap="round"/><path d="M12 21.30V21.60" stroke="#7a0000" stroke-width="2.700" stroke-linecap="round"/><path d="M12 21.30V21.60" stroke="#d40000" stroke-width="1.700" stroke-linecap="round"/></g>
<g transform="translate(1171,107) scale(1)"><path d="M13.400 1.300L22.600 4.700L16 7.300C12.500 9 11.900 12 11.900 15.500L11.400 21.800L1.200 17.900V12C1.500 6.500 6 2.500 13.400 1.300Z" fill="url(#gB2)" stroke="#0b2a57" stroke-width="0.700" stroke-linejoin="round"/><path d="M1.200 13L11.900 16.400L11.400 21.800L1.200 17.900Z" fill="#3465a4" stroke="#0b2a57" stroke-width="0.600" stroke-linejoin="round"/><path d="M1.500 14.800l10 3.400" stroke="#8fb6e3" stroke-width="1"/><path d="M9.500 2.500l8.500 3.600" stroke="#1b3a6b" stroke-width="0.600"/></g>
<g transform="translate(1204,107) scale(1)"><polygon points="12.500,1.800 22.700,5.200 12.600,17.600 1.300,13.500" fill="url(#gB2)" stroke="#0b2a57" stroke-width="0.700" stroke-linejoin="round"/><polygon points="1.300,13.500 12.600,17.600 12.300,22.600 1.300,18.700" fill="#3465a4" stroke="#0b2a57" stroke-width="0.600" stroke-linejoin="round"/><path d="M1.600 15.600l10.700 3.900" stroke="#8fb6e3" stroke-width="1"/><path d="M9.300 5.300l10 3.500" stroke="#1b3a6b" stroke-width="0.600"/></g>
<g transform="translate(1237,107) scale(1)"><polygon points="1.8,6.7 22.3,1.8 22.3,17.4 1.8,21.8" fill="url(#gB)" stroke="#0b2a57" stroke-width="0.7"/><path d="M1.8 6.200V22.800M22.3 0.900V19.400" stroke="#d40000" stroke-width="2.300"/></g>
<g transform="translate(1270,107) scale(1)"><polygon points="2.9,11.1 9.700,4.300 20.900,5.700 9.300,12" fill="#6a9ad4" stroke="#0b2a57" stroke-width="0.600" stroke-linejoin="round"/><polygon points="9.300,12 20.900,5.700 20.900,20.800 9.300,18.900" fill="url(#gB)" stroke="#0b2a57" stroke-width="0.600" stroke-linejoin="round"/><path d="M9.700 4.300L20.900 5.700V20.800" fill="none" stroke="#d40000" stroke-width="2.300" stroke-linejoin="round"/><path d="M20.900 20.800l-2.500-0.400" fill="none" stroke="#d40000" stroke-width="2"/><rect x="2.900" y="11.600" width="6.200" height="7" fill="#3f76bd" stroke="#d40000" stroke-width="2" transform="skewY(6) translate(0,-0.6)"/></g>
<g transform="translate(1303,107) scale(1)"><path d="M1.100 12.500C3 8 5 5 7.900 1.800L16.700 4.300C13 7 10.500 10 8.400 13.500Z" fill="#6a9ad4" stroke="#0b2a57" stroke-width="0.600" stroke-linejoin="round"/><path d="M8.400 13.500C10.500 10 13 7 16.700 4.300L22.500 14.500C17 16 12 18.500 8.400 21.800Z" fill="url(#gB)" stroke="#0b2a57" stroke-width="0.600" stroke-linejoin="round"/><path d="M7.900 1.800L16.700 4.300L22.500 14.500" fill="none" stroke="#d40000" stroke-width="2.300" stroke-linejoin="round"/><path d="M10.500 17c3-2.500 6-4.500 9.500-6" fill="none" stroke="#d40000" stroke-width="1" stroke-dasharray="2.200 1.800"/><rect x="1.100" y="13" width="7.200" height="7.800" fill="#3f76bd" stroke="#d40000" stroke-width="2.100" transform="skewY(7) translate(0,-0.7)"/><rect x="2.600" y="16.800" width="2.400" height="1.800" fill="#a00000" transform="skewY(7) translate(0,-0.7)"/><circle cx="21.500" cy="2.800" r="1.500" fill="#d40000" stroke="#7a0000" stroke-width="0.600"/></g>
<g transform="translate(1336,107) scale(1)"><polygon points="1.700,14.500 7,12.500 21.600,11.600 14.400,16" fill="#c6c6c6" stroke="#a8a8a8" stroke-width="0.600"/><path d="M10.950 0.850l6.850 6.850h-3.900v6.200l-2.700 0.800-2.700-0.800v-6.200h-3.900z" fill="#bababa" stroke="#a4a4a4" stroke-width="0.600"/><polygon points="2.200,22.300 9,18.400 21.700,18.900 14.400,23.300" fill="#c6c6c6" stroke="#a8a8a8" stroke-width="0.600"/></g>
<g transform="translate(1381,107) scale(1)"><polygon points="1.8,17.9 5.7,3.8 11.6,1.3 22.8,4.3 22.8,16.4 13,22.3" fill="#b2b2b2" stroke="#8c8c8c" stroke-width="0.9" stroke-linejoin="round"/><polygon points="7.6,5 12.500,3.300 12.500,15 7.200,16" fill="#c4c4c4" stroke="#8c8c8c" stroke-width="0.600"/><polygon points="12.500,3.300 20.800,5.300 20.800,16 12.500,15" fill="#cfcfcf" stroke="#8c8c8c" stroke-width="0.600"/><polygon points="7.200,16 12.500,15 20.800,16 13,20.300" fill="#dadada" stroke="#8c8c8c" stroke-width="0.600"/></g>
<g transform="translate(1414.4,107) scale(1)"><polygon points="2,3.8 7.400,1.300 21.500,2.800 19.100,3.800" fill="#729fcf" stroke="#0b2a57" stroke-width="0.700" stroke-linejoin="round"/><polygon points="19.100,3.800 21.500,2.800 21.500,16.900 19.100,17.900" fill="#204a87" stroke="#0b2a57" stroke-width="0.700" stroke-linejoin="round"/><polygon points="2,3.800 19.100,3.800 19.100,17.900 2,16.900" fill="#3465a4" stroke="#0b2a57" stroke-width="0.800" stroke-linejoin="round"/><polygon points="4.300,5 17.900,5 17.900,16.700 4.300,16" fill="#5b8bc9" stroke="#0b2a57" stroke-width="0.500"/><path d="M5 6.500h11.500v3.400h-1.500l1.200-1.200M9.900 12.300h4.400v2.500" fill="#3a7a06" stroke="#2a5a04" stroke-width="0.500"/><path d="M3.500 7.700h11.700v3.400h-6.800v2.400h3.900v2.500h-3.900v5.300h-4.900z" fill="#8ae234" stroke="#2f6a06" stroke-width="0.900" stroke-linejoin="round"/></g>
<g transform="translate(1447,107) scale(1)"><polygon points="1.1,5.7 11.800,2.300 23,4.300 13.800,6.700" fill="#9c9c9c" stroke="#8e8e8e" stroke-width="0.700" stroke-linejoin="round"/><polygon points="1.100,5.700 13.800,6.700 13.800,21.300 1.100,19.400" fill="#b2b2b2" stroke="#969696" stroke-width="0.700" stroke-linejoin="round"/><polygon points="13.800,6.700 23,4.300 23,17.400 13.800,21.300" fill="#d2d2d2" stroke="#a0a0a0" stroke-width="0.700" stroke-linejoin="round"/></g>
<g transform="translate(1496,107) scale(1)"><polygon points="3.2,7.2 11.500,4.700 20.800,6.700 13.500,8.600" fill="#729fcf" stroke="#0b2a57" stroke-width="0.700" stroke-linejoin="round"/><polygon points="3.200,7.200 13.500,8.600 13,19.400 3.700,16.900" fill="url(#gB2)" stroke="#0b2a57" stroke-width="0.700" stroke-linejoin="round"/><polygon points="13.500,8.600 20.800,6.700 20.300,16.400 13,19.400" fill="#2f5fa5" stroke="#0b2a57" stroke-width="0.700" stroke-linejoin="round"/><path d="M4.600 3.300h-3.200v17.500h3.200M19.400 3.300h3.200v17.500h-3.200" fill="none" stroke="#2e3436" stroke-width="1.100"/></g>
<g transform="translate(1541,107) scale(1)"><circle cx="16" cy="8" r="7" fill="url(#gBs)" stroke="#0b2a57" stroke-width="0.7"/><circle cx="8.5" cy="15.5" r="7.5" fill="url(#gBs)" stroke="#0b2a57" stroke-width="0.7"/></g>
<g transform="translate(1574,107) scale(1)"><circle cx="8.5" cy="15.5" r="7.5" fill="url(#gGs)"/><circle cx="16" cy="8" r="7" fill="url(#gWs)" stroke="#c4c4c4" stroke-width="0.6"/></g>
<g transform="translate(1652,107) scale(1)"><path d="M2.5 4l9-3 7 1.5 2.5 13-1 4-8 3-7.5-2.500z" fill="#c9ccc6" stroke="#7c7e78" stroke-width="0.9"/><path d="M4.5 7.500a6.5 7 0 0 1 11 2.500l.5 5a6 6 0 0 1-10.5 1.500z" fill="#555753"/><path d="M4.2 8.500c1.5-4 7-4.5 10.8-.5l.6 3.2-6.5 1.300z" fill="#edd400" stroke="#8f7a00" stroke-width="0.5"/><path d="M16.5 17.500l7 2.5-.5 3-7.5-2.500z" fill="#edd400" stroke="#8f7a00" stroke-width="0.6"/><rect x="17" y="9" width="2" height="7" rx="1" fill="#edd400" stroke="#8f7a00" stroke-width="0.4"/></g>
<rect x="160.0" y="109.5" width="1" height="19" fill="#c6c6c6"/>
<rect x="277.5" y="109.5" width="1" height="19" fill="#c6c6c6"/>
<rect x="363.0" y="109.5" width="1" height="19" fill="#c6c6c6"/>
<rect x="468.5" y="109.5" width="1" height="19" fill="#c6c6c6"/>
<rect x="575.0" y="109.5" width="1" height="19" fill="#c6c6c6"/>
<polygon points="113,117.8 121,117.8 117,122.3" fill="#555"/>
<polygon points="264,117.8 272,117.8 268,122.3" fill="#555"/>
<polygon points="316,117.8 324,117.8 320,122.3" fill="#555"/>
<polygon points="761,117.8 769,117.8 765,122.3" fill="#555"/>
<polygon points="1526,117.8 1534,117.8 1530,122.3" fill="#555"/>
<polygon points="1366,117.8 1374,117.8 1370,122.3" fill="#c8c8c8"/>
<rect x="620.6" y="111.6" width="1" height="1" fill="#fff"/><rect x="620" y="111" width="1" height="1" fill="#ababab"/><rect x="623.6" y="111.6" width="1" height="1" fill="#fff"/><rect x="623" y="111" width="1" height="1" fill="#ababab"/><rect x="620.6" y="114.6" width="1" height="1" fill="#fff"/><rect x="620" y="114" width="1" height="1" fill="#ababab"/><rect x="623.6" y="114.6" width="1" height="1" fill="#fff"/><rect x="623" y="114" width="1" height="1" fill="#ababab"/><rect x="620.6" y="117.6" width="1" height="1" fill="#fff"/><rect x="620" y="117" width="1" height="1" fill="#ababab"/><rect x="623.6" y="117.6" width="1" height="1" fill="#fff"/><rect x="623" y="117" width="1" height="1" fill="#ababab"/><rect x="620.6" y="120.6" width="1" height="1" fill="#fff"/><rect x="620" y="120" width="1" height="1" fill="#ababab"/><rect x="623.6" y="120.6" width="1" height="1" fill="#fff"/><rect x="623" y="120" width="1" height="1" fill="#ababab"/><rect x="620.6" y="123.6" width="1" height="1" fill="#fff"/><rect x="620" y="123" width="1" height="1" fill="#ababab"/><rect x="623.6" y="123.6" width="1" height="1" fill="#fff"/><rect x="623" y="123" width="1" height="1" fill="#ababab"/><rect x="620.6" y="126.6" width="1" height="1" fill="#fff"/><rect x="620" y="126" width="1" height="1" fill="#ababab"/><rect x="623.6" y="126.6" width="1" height="1" fill="#fff"/><rect x="623" y="126" width="1" height="1" fill="#ababab"/>
<rect x="780.6" y="111.6" width="1" height="1" fill="#fff"/><rect x="780" y="111" width="1" height="1" fill="#ababab"/><rect x="783.6" y="111.6" width="1" height="1" fill="#fff"/><rect x="783" y="111" width="1" height="1" fill="#ababab"/><rect x="780.6" y="114.6" width="1" height="1" fill="#fff"/><rect x="780" y="114" width="1" height="1" fill="#ababab"/><rect x="783.6" y="114.6" width="1" height="1" fill="#fff"/><rect x="783" y="114" width="1" height="1" fill="#ababab"/><rect x="780.6" y="117.6" width="1" height="1" fill="#fff"/><rect x="780" y="117" width="1" height="1" fill="#ababab"/><rect x="783.6" y="117.6" width="1" height="1" fill="#fff"/><rect x="783" y="117" width="1" height="1" fill="#ababab"/><rect x="780.6" y="120.6" width="1" height="1" fill="#fff"/><rect x="780" y="120" width="1" height="1" fill="#ababab"/><rect x="783.6" y="120.6" width="1" height="1" fill="#fff"/><rect x="783" y="120" width="1" height="1" fill="#ababab"/><rect x="780.6" y="123.6" width="1" height="1" fill="#fff"/><rect x="780" y="123" width="1" height="1" fill="#ababab"/><rect x="783.6" y="123.6" width="1" height="1" fill="#fff"/><rect x="783" y="123" width="1" height="1" fill="#ababab"/><rect x="780.6" y="126.6" width="1" height="1" fill="#fff"/><rect x="780" y="126" width="1" height="1" fill="#ababab"/><rect x="783.6" y="126.6" width="1" height="1" fill="#fff"/><rect x="783" y="126" width="1" height="1" fill="#ababab"/>
<rect x="1060.6" y="111.6" width="1" height="1" fill="#fff"/><rect x="1060" y="111" width="1" height="1" fill="#ababab"/><rect x="1063.6" y="111.6" width="1" height="1" fill="#fff"/><rect x="1063" y="111" width="1" height="1" fill="#ababab"/><rect x="1060.6" y="114.6" width="1" height="1" fill="#fff"/><rect x="1060" y="114" width="1" height="1" fill="#ababab"/><rect x="1063.6" y="114.6" width="1" height="1" fill="#fff"/><rect x="1063" y="114" width="1" height="1" fill="#ababab"/><rect x="1060.6" y="117.6" width="1" height="1" fill="#fff"/><rect x="1060" y="117" width="1" height="1" fill="#ababab"/><rect x="1063.6" y="117.6" width="1" height="1" fill="#fff"/><rect x="1063" y="117" width="1" height="1" fill="#ababab"/><rect x="1060.6" y="120.6" width="1" height="1" fill="#fff"/><rect x="1060" y="120" width="1" height="1" fill="#ababab"/><rect x="1063.6" y="120.6" width="1" height="1" fill="#fff"/><rect x="1063" y="120" width="1" height="1" fill="#ababab"/><rect x="1060.6" y="123.6" width="1" height="1" fill="#fff"/><rect x="1060" y="123" width="1" height="1" fill="#ababab"/><rect x="1063.6" y="123.6" width="1" height="1" fill="#fff"/><rect x="1063" y="123" width="1" height="1" fill="#ababab"/><rect x="1060.6" y="126.6" width="1" height="1" fill="#fff"/><rect x="1060" y="126" width="1" height="1" fill="#ababab"/><rect x="1063.6" y="126.6" width="1" height="1" fill="#fff"/><rect x="1063" y="126" width="1" height="1" fill="#ababab"/>
<rect x="1484.6" y="111.6" width="1" height="1" fill="#fff"/><rect x="1484" y="111" width="1" height="1" fill="#ababab"/><rect x="1487.6" y="111.6" width="1" height="1" fill="#fff"/><rect x="1487" y="111" width="1" height="1" fill="#ababab"/><rect x="1484.6" y="114.6" width="1" height="1" fill="#fff"/><rect x="1484" y="114" width="1" height="1" fill="#ababab"/><rect x="1487.6" y="114.6" width="1" height="1" fill="#fff"/><rect x="1487" y="114" width="1" height="1" fill="#ababab"/><rect x="1484.6" y="117.6" width="1" height="1" fill="#fff"/><rect x="1484" y="117" width="1" height="1" fill="#ababab"/><rect x="1487.6" y="117.6" width="1" height="1" fill="#fff"/><rect x="1487" y="117" width="1" height="1" fill="#ababab"/><rect x="1484.6" y="120.6" width="1" height="1" fill="#fff"/><rect x="1484" y="120" width="1" height="1" fill="#ababab"/><rect x="1487.6" y="120.6" width="1" height="1" fill="#fff"/><rect x="1487" y="120" width="1" height="1" fill="#ababab"/><rect x="1484.6" y="123.6" width="1" height="1" fill="#fff"/><rect x="1484" y="123" width="1" height="1" fill="#ababab"/><rect x="1487.6" y="123.6" width="1" height="1" fill="#fff"/><rect x="1487" y="123" width="1" height="1" fill="#ababab"/><rect x="1484.6" y="126.6" width="1" height="1" fill="#fff"/><rect x="1484" y="126" width="1" height="1" fill="#ababab"/><rect x="1487.6" y="126.6" width="1" height="1" fill="#fff"/><rect x="1487" y="126" width="1" height="1" fill="#ababab"/>
<rect x="1641.6" y="111.6" width="1" height="1" fill="#fff"/><rect x="1641" y="111" width="1" height="1" fill="#ababab"/><rect x="1644.6" y="111.6" width="1" height="1" fill="#fff"/><rect x="1644" y="111" width="1" height="1" fill="#ababab"/><rect x="1641.6" y="114.6" width="1" height="1" fill="#fff"/><rect x="1641" y="114" width="1" height="1" fill="#ababab"/><rect x="1644.6" y="114.6" width="1" height="1" fill="#fff"/><rect x="1644" y="114" width="1" height="1" fill="#ababab"/><rect x="1641.6" y="117.6" width="1" height="1" fill="#fff"/><rect x="1641" y="117" width="1" height="1" fill="#ababab"/><rect x="1644.6" y="117.6" width="1" height="1" fill="#fff"/><rect x="1644" y="117" width="1" height="1" fill="#ababab"/><rect x="1641.6" y="120.6" width="1" height="1" fill="#fff"/><rect x="1641" y="120" width="1" height="1" fill="#ababab"/><rect x="1644.6" y="120.6" width="1" height="1" fill="#fff"/><rect x="1644" y="120" width="1" height="1" fill="#ababab"/><rect x="1641.6" y="123.6" width="1" height="1" fill="#fff"/><rect x="1641" y="123" width="1" height="1" fill="#ababab"/><rect x="1644.6" y="123.6" width="1" height="1" fill="#fff"/><rect x="1644" y="123" width="1" height="1" fill="#ababab"/><rect x="1641.6" y="126.6" width="1" height="1" fill="#fff"/><rect x="1641" y="126" width="1" height="1" fill="#ababab"/><rect x="1644.6" y="126.6" width="1" height="1" fill="#fff"/><rect x="1644" y="126" width="1" height="1" fill="#ababab"/></g>
<g id="misc"><path d="M1608 22.500h8.5" stroke="#fff" stroke-width="1.3"/>
<rect x="1642.5" y="16.5" width="7" height="7" fill="none" stroke="#fff" stroke-width="1.3"/>
<path d="M1676 16l8 8M1684 16l-8 8" stroke="#fff" stroke-width="1.3"/>
<rect x="411.5" y="143.5" width="10" height="10" rx="2" fill="#f4f4f4" stroke="#8a8a8a"/><rect x="415.5" y="145.5" width="4" height="4" rx="0.8" fill="none" stroke="#707070" stroke-width="0.9"/><rect x="413.5" y="147.5" width="4" height="4" rx="0.8" fill="#f4f4f4" stroke="#707070" stroke-width="0.9"/><rect x="425.5" y="143.5" width="10" height="10" rx="2" fill="#f4f4f4" stroke="#8a8a8a"/><path d="M428 146l5 5M433 146l-5 5" stroke="#4a4a4a" stroke-width="2"/>
<rect x="195.5" y="1178.5" width="10" height="10" rx="2" fill="#f4f4f4" stroke="#8a8a8a"/><rect x="199.5" y="1180.5" width="4" height="4" rx="0.8" fill="none" stroke="#707070" stroke-width="0.9"/><rect x="197.5" y="1182.5" width="4" height="4" rx="0.8" fill="#f4f4f4" stroke="#707070" stroke-width="0.9"/><rect x="209.5" y="1178.5" width="10" height="10" rx="2" fill="#f4f4f4" stroke="#8a8a8a"/><path d="M212 1181l5 5M217 1181l-5 5" stroke="#4a4a4a" stroke-width="2"/>
<rect x="1672.0" y="1178.5" width="10" height="10" rx="2" fill="#f4f4f4" stroke="#8a8a8a"/><rect x="1676.0" y="1180.5" width="4" height="4" rx="0.8" fill="none" stroke="#707070" stroke-width="0.9"/><rect x="1674.0" y="1182.5" width="4" height="4" rx="0.8" fill="#f4f4f4" stroke="#707070" stroke-width="0.9"/><rect x="1686.0" y="1178.5" width="10" height="10" rx="2" fill="#f4f4f4" stroke="#8a8a8a"/><path d="M1688.5 1181l5 5M1693.5 1181l-5 5" stroke="#4a4a4a" stroke-width="2"/>
<polygon points="9.5,233.3 17.1,233.3 13.3,237.5" fill="#555"/>
<polygon points="29.2,328.09999999999997 36.8,328.09999999999997 33,332.3" fill="#555"/>
<polygon points="29.2,385.29999999999995 36.8,385.29999999999995 33,389.5" fill="#555"/>
<polygon points="49.1,404.4 56.699999999999996,404.4 52.9,408.6" fill="#555"/>
<polygon points="51.0,345.5 55.400000000000006,349.3 51.0,353.1" fill="#555"/>
<polygon points="70.89999999999999,421.7 75.3,425.5 70.89999999999999,429.3" fill="#555"/>
<polygon points="70.89999999999999,440.7 75.3,444.5 70.89999999999999,448.3" fill="#555"/>
<polygon points="30.7,459.7 35.1,463.5 30.7,467.3" fill="#555"/>
<rect x="27.5" y="227.5" width="13" height="15" rx="1" fill="#fdfdfd" stroke="#a8a8a8"/>
<circle cx="36.5" cy="232.3" r="3.3" fill="#e01b24"/>
<polygon points="29.5,234.5 33.5,233 37.5,234.3 37.5,239 33.3,241 29.5,239.3" fill="#3465a4" stroke="#1b3a6b" stroke-width="0.6"/><polygon points="29.5,234.5 33.5,233 37.5,234.3 33.3,236" fill="#729fcf"/>
<g transform="translate(46.2,246) scale(0.6667)"><ellipse cx="12" cy="22" rx="9" ry="1.8" fill="#e4e4e4"/><polygon points="1,21 4,6 9,1.5 13,6 17,2 20,3 23,9 22.5,20 17,22 15,9 11,13 9,21" fill="#b4b4b4" stroke="#a2a2a2" stroke-width="0.8"/><polygon points="9,1.5 13,6 11,13 9,21 8,8" fill="#cfcfcf"/><polygon points="17,2 20,3 18,13 17,22 15,9" fill="#9c9c9c"/><path d="M4 6l4 2M20 3l-2 10" stroke="#a2a2a2" stroke-width="0.7"/></g>
<g transform="translate(46.2,265) scale(0.6667)"><polygon points="1,6.5 13,2 23,5 23,18 12,22.5 1,19" fill="#9c9c9c" stroke="#929292" stroke-width="0.8"/><polygon points="1,6.5 13,2 23,5 12,9" fill="#cfcfcf" stroke="#a4a4a4" stroke-width="0.6"/><polygon points="12,9 23,5 23,18 12,22.5" fill="#b4b4b4" stroke="#a4a4a4" stroke-width="0.6"/></g>
<g transform="translate(46.2,284) scale(0.6667)"><polygon points="1,6.5 13,2 23,5 23,18 12,22.5 1,19" fill="#9c9c9c" stroke="#929292" stroke-width="0.8"/><polygon points="1,6.5 13,2 23,5 12,9" fill="#cfcfcf" stroke="#a4a4a4" stroke-width="0.6"/><polygon points="12,9 23,5 23,18 12,22.5" fill="#b4b4b4" stroke="#a4a4a4" stroke-width="0.6"/></g>
<g transform="translate(46.2,303) scale(0.6667)"><polygon points="13,5 19,1 23,3 23,8 18,12 13,10" fill="#9c9c9c"/><polygon points="1,17 6,13 11,15 11,20 6,23.5 1,22" fill="#9c9c9c" stroke="#8a8a8a" stroke-width="0.8"/><path d="M1 17l5 2 5-4M6 19v4" stroke="#8a8a8a" stroke-width="0.8" fill="none"/><path d="M3 9l7-6M10 3l-4.5 .5M10 3l-1 4.5" stroke="#8a8a8a" stroke-width="2"/></g>
<g transform="translate(47,322) scale(0.6667)"><polygon points="2,8 9,2 15,4.5 15,9 21,12 21,18 12,23 2,18" fill="#9c9c9c" stroke="#8a8a8a" stroke-width="0.9"/><polygon points="2,8 9,2 15,4.5 8,10" fill="#cfcfcf"/><polygon points="8,14 15,9 21,12 13,17" fill="#cfcfcf"/><path d="M8 10v4.500l5 2.500v6" fill="none" stroke="#8a8a8a" stroke-width="0.8"/></g>
<g transform="translate(66.5,340.5) scale(0.6667)"><path d="M11 1.500v12M11 13.500l11.5 1M11 13.500l-8.5 9" fill="none" stroke="#a6a6a6" stroke-width="2.6" stroke-linecap="round"/></g>
<g transform="translate(66,361) scale(0.6667)"><path d="M1 5v14a11 4 0 0 0 22 0v-14" fill="#c0c0c0"/><ellipse cx="12" cy="5" rx="11" ry="4" fill="#dcdcdc" stroke="#b0b0b0" stroke-width="0.8"/><path d="M3 18c2-7 8-9 14-10" stroke="#e8e8e8" stroke-width="3" fill="none"/><circle cx="17.5" cy="17.5" r="5.8" fill="#fff" stroke="#10c010" stroke-width="2.2"/><path d="M17.5 13.500v5M15 17.500l2.5 3 2.5-3" stroke="#10c010" stroke-width="2" fill="none"/></g>
<g transform="translate(46,379) scale(0.6667)"><path d="M0.5 4a2 2 0 0 1 2-2h7l2 2.5h10a2 2 0 0 1 2 2v14a2 2 0 0 1-2 2h-19a2 2 0 0 1-2-2z" fill="#5b4f9e"/><path d="M0.5 7.5a2 2 0 0 1 2-2h19a2 2 0 0 1 2 2v13a2 2 0 0 1-2 2h-19a2 2 0 0 1-2-2z" fill="#6c6c6c" stroke="#555" stroke-width="0.8"/></g>
<g transform="translate(66.2,398.5) scale(0.6667)"><circle cx="16" cy="8" r="7.2" fill="#5b8bc9"/><circle cx="8.5" cy="15.5" r="7.8" fill="#3f76bd"/><path d="M9 9.500l7 6.5" stroke="#3468ab" stroke-width="1.6"/></g>
<g transform="translate(86.3,417.5) scale(0.6667)"><path d="M5 1h14v10l4 1.500v3l-7 3v4.500h-8v-4.500l-7-3v-3l4-1.500z" fill="#cfcfcf" stroke="#bdbdbd" stroke-width="0.8"/><polygon points="7,3 12,1.5 17,3 17,10 12,12 7,10" fill="#9c9c9c"/><polygon points="12,5 17,3 17,10 12,12" fill="#b8b8b8"/></g>
<g transform="translate(86.3,436.5) scale(0.6667)"><path d="M5 1h14v10l4 1.500v3l-7 3v4.500h-8v-4.500l-7-3v-3l4-1.500z" fill="#cfcfcf" stroke="#bdbdbd" stroke-width="0.8"/><polygon points="7,3 12,1.5 17,3 17,10 12,12 7,10" fill="#9c9c9c"/><polygon points="12,5 17,3 17,10 12,12" fill="#b8b8b8"/></g>
<g transform="translate(46.2,455.5) scale(0.6667)"><polygon points="1.1,7.2 8.900,3.300 8.900,15.900 1.100,20.800" fill="url(#gB)" stroke="#0b2a57" stroke-width="0.800" stroke-linejoin="round"/><polygon points="23,7.2 15.200,3.300 15.200,15.900 23,20.800" fill="#5b8bc9" stroke="#0b2a57" stroke-width="0.800" stroke-linejoin="round"/><path d="M12 2.60V3.90" stroke="#7a0000" stroke-width="2.700" stroke-linecap="round"/><path d="M12 2.60V3.90" stroke="#d40000" stroke-width="1.700" stroke-linecap="round"/><path d="M12 10.10V12.30" stroke="#7a0000" stroke-width="2.700" stroke-linecap="round"/><path d="M12 10.10V12.30" stroke="#d40000" stroke-width="1.700" stroke-linecap="round"/><path d="M12 16.70V17.30" stroke="#7a0000" stroke-width="2.700" stroke-linecap="round"/><path d="M12 16.70V17.30" stroke="#d40000" stroke-width="1.700" stroke-linecap="round"/><path d="M12 21.30V21.60" stroke="#7a0000" stroke-width="2.700" stroke-linecap="round"/><path d="M12 21.30V21.60" stroke="#d40000" stroke-width="1.700" stroke-linecap="round"/></g>
<rect x="211" y="637.5" width="1" height="1" fill="#a8a8a8"/>
<rect x="848" y="1169.5" width="1" height="1" fill="#a8a8a8"/>
<rect x="441" y="646" width="1" height="1" fill="#a8a8a8"/>
<rect x="225" y="1280" width="1" height="1" fill="#a8a8a8"/>
<rect x="214" y="637.5" width="1" height="1" fill="#a8a8a8"/>
<rect x="851" y="1169.5" width="1" height="1" fill="#a8a8a8"/>
<rect x="441" y="649" width="1" height="1" fill="#a8a8a8"/>
<rect x="225" y="1283" width="1" height="1" fill="#a8a8a8"/>
<rect x="217" y="637.5" width="1" height="1" fill="#a8a8a8"/>
<rect x="854" y="1169.5" width="1" height="1" fill="#a8a8a8"/>
<rect x="441" y="652" width="1" height="1" fill="#a8a8a8"/>
<rect x="225" y="1286" width="1" height="1" fill="#a8a8a8"/>
<rect x="220" y="637.5" width="1" height="1" fill="#a8a8a8"/>
<rect x="857" y="1169.5" width="1" height="1" fill="#a8a8a8"/>
<rect x="441" y="655" width="1" height="1" fill="#a8a8a8"/>
<rect x="225" y="1289" width="1" height="1" fill="#a8a8a8"/>
<rect x="223" y="637.5" width="1" height="1" fill="#a8a8a8"/>
<rect x="860" y="1169.5" width="1" height="1" fill="#a8a8a8"/>
<rect x="441" y="658" width="1" height="1" fill="#a8a8a8"/>
<rect x="225" y="1292" width="1" height="1" fill="#a8a8a8"/>
<rect x="226" y="637.5" width="1" height="1" fill="#a8a8a8"/>
<rect x="863" y="1169.5" width="1" height="1" fill="#a8a8a8"/>
<rect x="441" y="661" width="1" height="1" fill="#a8a8a8"/>
<rect x="225" y="1295" width="1" height="1" fill="#a8a8a8"/>
<g transform="translate(456,1142)"><path d="M0.5 0.500h9.500v3.200h-5.500v3h4v3h-4v6h-4z" fill="#d81e1e" stroke="#8a1010" stroke-width="0.6"/><circle cx="10" cy="10.5" r="4" fill="none" stroke="#3465a4" stroke-width="2.4" stroke-dasharray="1.8 1.350"/><circle cx="10" cy="10.5" r="2.7" fill="#5b8bc9" stroke="#3465a4" stroke-width="1.2"/><circle cx="10" cy="10.5" r="1.2" fill="#eef"/></g>
<g transform="translate(595,1143)"><path d="M0.5 0.500h9.500v3.200h-5.500v3h4v3h-4v6h-4z" fill="#d81e1e" stroke="#8a1010" stroke-width="0.6"/><circle cx="10" cy="10.5" r="4" fill="none" stroke="#3465a4" stroke-width="2.4" stroke-dasharray="1.8 1.350"/><circle cx="10" cy="10.5" r="2.7" fill="#5b8bc9" stroke="#3465a4" stroke-width="1.2"/><circle cx="10" cy="10.5" r="1.2" fill="#eef"/></g>
<circle cx="560" cy="1151" r="8" fill="#c7162b"/><path d="M557 1148l6 6M563 1148l-6 6" stroke="#fff" stroke-width="1.7"/>
<circle cx="858.7" cy="1152" r="8" fill="#c7162b"/><path d="M855.7 1149l6 6M861.7 1149l-6 6" stroke="#fff" stroke-width="1.7"/>
<polygon points="1686,1203 1694,1203 1690,1198.5" fill="#555"/><polygon points="1686,1374.5 1694,1374.5 1690,1379" fill="#555"/>
<rect x="1422.5" y="1393.5" width="8.5" height="12.5" rx="4" fill="none" stroke="#3a3a3a" stroke-width="1.6"/><path d="M1426.7 1394v4.5" stroke="#444" stroke-width="1.6"/>
<polygon points="1492.5,1398.5 1497.5,1398.5 1495,1401.5" fill="#555"/>
<rect x="1695" y="1404" width="1.3" height="1.3" fill="#b0b0b0"/>
<rect x="1692" y="1407" width="1.3" height="1.3" fill="#b0b0b0"/>
<rect x="1695" y="1407" width="1.3" height="1.3" fill="#b0b0b0"/>
<rect x="1689" y="1410" width="1.3" height="1.3" fill="#b0b0b0"/>
<rect x="1692" y="1410" width="1.3" height="1.3" fill="#b0b0b0"/>
<rect x="1695" y="1410" width="1.3" height="1.3" fill="#b0b0b0"/>
<path d="M1624.3 116.3l2.900 2.800-2.900 2.800M1628.6 116.3l2.900 2.800-2.900 2.800" fill="none" stroke="#4a4a4a" stroke-width="1.150"/>
<path d="M1686.2 116.3l2.900 2.800-2.900 2.800M1690.5 116.3l2.900 2.800-2.900 2.800" fill="none" stroke="#4a4a4a" stroke-width="1.150"/>
<g transform="translate(1550,140) scale(0.10593)"><polygon points="710,65 815,170 605,170" fill="#b8b8d4" fill-opacity="0.62"/><polygon points="595,1190 825,1190 710,1305" fill="#b8b8d4" fill-opacity="0.62"/><polygon points="85,685 195,575 195,795" fill="#b8b8d4" fill-opacity="0.62"/><polygon points="1330,685 1220,575 1220,795" fill="#b8b8d4" fill-opacity="0.62"/><path d="M525,120 L548,195 Q420,240 345,340 L395,385 L245,390 L250,280 L285,305 Q380,180 525,120 Z" fill="#b8b8d4" fill-opacity="0.62"/><path d="M890,120 L868,195 Q995,240 1070,340 L1020,385 L1172,390 L1165,280 L1130,305 Q1035,180 890,120 Z" fill="#b8b8d4" fill-opacity="0.62"/><path d="M470,380 L815,330 Q900,340 960,430 L1040,560 Q1075,640 1050,720 L975,905 Q950,960 880,985 L640,1040 Q560,1040 510,985 L440,780 L405,470 Q410,400 470,380 Z" fill="#9898b8" fill-opacity="0.95"/><path d="M500,395 L800,345 Q850,345 865,395 L875,560 Q870,605 820,620 L580,665 Q510,665 490,610 L455,450 Q450,405 500,395 Z" fill="#cdcdde"/><path d="M570,745 L820,700 Q870,700 890,740 L960,880 Q970,930 920,955 L650,1030 Q590,1035 565,985 L520,810 Q520,760 570,745 Z" fill="#cdcdde"/><path d="M890,420 L955,450 L1030,560 L960,590 L880,570 Z" fill="#c6c6dc"/><path d="M880,700 L1000,680 L1040,740 L980,890 L960,870 Z" fill="#c6c6dc"/><ellipse cx="1005" cy="615" rx="45" ry="70" fill="#cfcfe0"/><circle cx="490" cy="705" r="62" fill="#cfcfe0" fill-opacity="0.9"/><g fill="none" stroke="#0a0a0a" stroke-width="14"><path d="M640,425h55M700,410h30M650,455h40M690,470h55M640,490h30M700,495h50M665,520h95M690,505v30"/><path d="M725,820h50M790,800l25,-10M720,850h25M760,850h55M725,880h30M770,880h40M735,905h15M780,905h35M720,930h30M800,860v55"/></g><path d="M500,1125L420,870" stroke="#00ee00" stroke-width="17"/><path d="M505,1125L470,820" stroke="#ee1111" stroke-width="19"/><path d="M470,820v80" stroke="#f08080" stroke-width="15"/><path d="M500,1125L890,1040" stroke="#0000ff" stroke-width="20"/><text x="1062" y="1020" font-size="98" fill="#0000ff">Z</text><text x="395" y="726" font-size="88" fill="#22dd22">Y</text><text x="472" y="738" font-size="88" fill="#f0a0a0">X</text><polygon points="925,1105 1015,1075 1110,1100 1110,1215 1020,1250 925,1220" fill="#7f7fa0"/><polygon points="925,1105 1015,1075 1110,1100 1020,1130" fill="#9292b2"/><polygon points="1020,1130 1110,1100 1110,1215 1020,1250" fill="#8a8aaa"/><polygon points="1150,1135 1265,1135 1208,1190" fill="#3c3c5c"/></g>
<g transform="translate(1620,1030) scale(0.049444)"><path d="M545,1060L450,790" stroke="#8b1a1a" stroke-width="26"/><polygon points="420,880 455,760 545,870 500,930" fill="#8b1a1a"/><path d="M565,1150L548,510" stroke="#1e8a1e" stroke-width="44"/><polygon points="548,570 465,765 645,755" fill="#1e8a1e"/><path d="M565,1140L1230,1025" stroke="#1a1a8b" stroke-width="36"/><polygon points="990,1020 1235,1015 1010,1135" fill="#1a1a8b"/><text x="575" y="520" font-size="200" fill="#000">Y</text><text x="1262" y="1030" font-size="200" fill="#000">Z</text><text x="495" y="770" font-size="190" fill="#000">X</text></g></g>
<g id="text"><text x="801.5" y="25.8" font-size="15" fill="#fff" font-weight="bold" textLength="95.8" lengthAdjust="spacingAndGlyphs" >FreeCAD 0.19</text>
<text x="10.3" y="54.5" font-size="15" fill="#000" textLength="23.7" lengthAdjust="spacingAndGlyphs" >File</text>
<rect x="10.3" y="56.1" width="7.6" height="1.4" fill="#000"/>
<text x="49" y="54.5" font-size="15" fill="#000" textLength="27" lengthAdjust="spacingAndGlyphs" >Edit</text>
<rect x="49" y="56.1" width="8.8" height="1.4" fill="#000"/>
<text x="90" y="54.5" font-size="15" fill="#000" textLength="33.5" lengthAdjust="spacingAndGlyphs" >View</text>
<rect x="90" y="56.1" width="10" height="1.4" fill="#000"/>
<text x="138" y="54.5" font-size="15" fill="#000" textLength="37" lengthAdjust="spacingAndGlyphs" >Tools</text>
<rect x="138" y="56.1" width="7.8" height="1.4" fill="#000"/>
<text x="189" y="54.5" font-size="15" fill="#000" textLength="42.5" lengthAdjust="spacingAndGlyphs" >Macro</text>
<rect x="189" y="56.1" width="13" height="1.4" fill="#000"/>
<text x="246" y="54.5" font-size="15" fill="#000" textLength="29" lengthAdjust="spacingAndGlyphs" >Part</text>
<rect x="246" y="56.1" width="8.5" height="1.4" fill="#000"/>
<text x="289" y="54.5" font-size="15" fill="#000" textLength="58.5" lengthAdjust="spacingAndGlyphs" >Measure</text>
<text x="362" y="54.5" font-size="15" fill="#000" textLength="62.6" lengthAdjust="spacingAndGlyphs" >Windows</text>
<rect x="362" y="56.1" width="14.5" height="1.4" fill="#000"/>
<text x="438.7" y="54.5" font-size="15" fill="#000" textLength="32.3" lengthAdjust="spacingAndGlyphs" >Help</text>
<rect x="438.7" y="56.1" width="10" height="1.4" fill="#000"/>
<text x="469.8" y="85.5" font-size="15" fill="#000" textLength="27.2" lengthAdjust="spacingAndGlyphs" >Part</text>
<text x="4.4" y="153.8" font-size="15" fill="#000" textLength="84.6" lengthAdjust="spacingAndGlyphs" >Combo View</text>
<text x="12.6" y="177.7" font-size="15" fill="#000" textLength="42.9" lengthAdjust="spacingAndGlyphs" >Model</text>
<text x="80" y="178.6" font-size="15" fill="#000" textLength="36.6" lengthAdjust="spacingAndGlyphs" >Tasks</text>
<text x="5.7" y="203.6" font-size="15" fill="#000" textLength="129.3" lengthAdjust="spacingAndGlyphs" >Labels &amp; Attributes</text>
<text x="282.3" y="203.6" font-size="15" fill="#000" textLength="77.7" lengthAdjust="spacingAndGlyphs" >Description</text>
<text x="6.3" y="222.5" font-size="15" fill="#000" textLength="76.5" lengthAdjust="spacingAndGlyphs" >Application</text>
<text x="48.5" y="240.9" font-size="15" fill="#000" font-weight="bold" textLength="213.7" lengthAdjust="spacingAndGlyphs" >cam-mount-tops-rotated-both</text>
<text x="68.3" y="259.9" font-size="15" fill="#c2c2c2" textLength="110.1" lengthAdjust="spacingAndGlyphs" >cam_mount_top</text>
<text x="68.3" y="278.9" font-size="15" fill="#c2c2c2" textLength="134.9" lengthAdjust="spacingAndGlyphs" >cam_mount_top001</text>
<text x="68.3" y="297.9" font-size="15" fill="#c2c2c2" textLength="181.3" lengthAdjust="spacingAndGlyphs" >cam_mount_top001 (Solid)</text>
<text x="68.3" y="316.9" font-size="15" fill="#c2c2c2" textLength="206.3" lengthAdjust="spacingAndGlyphs" >cam_mount_top001 (Solid)001</text>
<text x="68.3" y="335.9" font-size="15" fill="#c2c2c2" font-weight="bold" textLength="35.4" lengthAdjust="spacingAndGlyphs" >Body</text>
<text x="88.4" y="354.9" font-size="15" fill="#c2c2c2" textLength="41.0" lengthAdjust="spacingAndGlyphs" >Origin</text>
<text x="88.4" y="373.9" font-size="15" fill="#c2c2c2" textLength="83.9" lengthAdjust="spacingAndGlyphs" >BaseFeature</text>
<text x="68.3" y="392.9" font-size="15" fill="#000" textLength="98.0" lengthAdjust="spacingAndGlyphs" >Exploded Slice</text>
<text x="88.4" y="411.9" font-size="15" fill="#000" textLength="43.1" lengthAdjust="spacingAndGlyphs" >Fusion</text>
<text x="108.3" y="430.9" font-size="15" fill="#c2c2c2" textLength="42.6" lengthAdjust="spacingAndGlyphs" >Slice.0</text>
<text x="108.3" y="449.9" font-size="15" fill="#c2c2c2" textLength="41.3" lengthAdjust="spacingAndGlyphs" >Slice.1</text>
<text x="68.3" y="468.9" font-size="15" fill="#000" textLength="121.2" lengthAdjust="spacingAndGlyphs" >Fusion (Mirror #1)</text>
<text x="7.2" y="659.2" font-size="15" fill="#000" textLength="59.8" lengthAdjust="spacingAndGlyphs" >Property</text>
<text x="107" y="659.2" font-size="15" fill="#000" textLength="37.9" lengthAdjust="spacingAndGlyphs" >Value</text>
<text x="14.4" y="1156" font-size="15" fill="#000" textLength="33.1" lengthAdjust="spacingAndGlyphs" >View</text>
<text x="73" y="1157" font-size="15" fill="#000" textLength="30.9" lengthAdjust="spacingAndGlyphs" >Data</text>
<text x="4.4" y="1189" font-size="15" fill="#000" textLength="81.2" lengthAdjust="spacingAndGlyphs" >Report view</text>
<text x="232" y="1189" font-size="15" fill="#000" textLength="104.3" lengthAdjust="spacingAndGlyphs" >Python console</text>
<text x="476.5" y="1157" font-size="15" fill="#000" textLength="69.7" lengthAdjust="spacingAndGlyphs" >Start page</text>
<text x="615.7" y="1158" font-size="15" fill="#000" textLength="230.1" lengthAdjust="spacingAndGlyphs" >cam-mount-tops-rotated-both : 1*</text>
<text x="2.6" y="1405.5" font-size="15" fill="#000" textLength="613.4" lengthAdjust="spacingAndGlyphs" >Preselected: Unnamed.Fusion.Edge1062 (43.923637 mm, 364.412872 mm, -17.389452 mm)</text>
<text x="1437.5" y="1405.5" font-size="15" fill="#000" textLength="52.3" lengthAdjust="spacingAndGlyphs" >Blender</text>
<text x="1509.2" y="1405.5" font-size="15" fill="#000" textLength="164.2" lengthAdjust="spacingAndGlyphs" >443.78 mm x 352.83 mm</text>
<text x="5.5" y="1209.5" font-size="13" fill="#ffb225" class="m" textLength="147.5" lengthAdjust="spacingAndGlyphs" xml:space="preserve">05:00:35  No object</text>
<text x="5.5" y="1225.5" font-size="13" fill="#ffb225" class="m" textLength="69.9" lengthAdjust="spacingAndGlyphs" xml:space="preserve">selected.</text>
<text x="5.5" y="1241.5" font-size="13" fill="#ffb225" class="m" textLength="62.1" lengthAdjust="spacingAndGlyphs" xml:space="preserve">05:01:39</text>
<text x="5.5" y="1257.5" font-size="13" fill="#ffb225" class="m" textLength="163.0" lengthAdjust="spacingAndGlyphs" xml:space="preserve">Part::FeaturePython /</text>
<text x="5.5" y="1273.5" font-size="13" fill="#ffb225" class="m" textLength="201.8" lengthAdjust="spacingAndGlyphs" xml:space="preserve">Slice: Links go out of the</text>
<text x="5.5" y="1289.5" font-size="13" fill="#ffb225" class="m" textLength="100.9" lengthAdjust="spacingAndGlyphs" xml:space="preserve">allowed scope</text>
<text x="5.5" y="1305.5" font-size="13" fill="#ffb225" class="m" textLength="147.5" lengthAdjust="spacingAndGlyphs" xml:space="preserve">05:09:00  No object</text>
<text x="5.5" y="1321.5" font-size="13" fill="#ffb225" class="m" textLength="69.9" lengthAdjust="spacingAndGlyphs" xml:space="preserve">selected.</text>
<text x="233.2" y="1205.4" font-size="13" fill="#000" class="m" textLength="248.4" lengthAdjust="spacingAndGlyphs" xml:space="preserve"><tspan fill="#a8a8a8">&gt;&gt;&gt; </tspan><tspan fill="#10b010">### Begin command Std_Export</tspan></text>
<text x="233.2" y="1221.4" font-size="13" fill="#000" class="m" textLength="116.4" lengthAdjust="spacingAndGlyphs" xml:space="preserve"><tspan fill="#a8a8a8">&gt;&gt;&gt; </tspan><tspan fill="#2c2c2c">__objs__</tspan><tspan fill="#a8a8a8">=[]</tspan></text>
<text x="233.2" y="1237.4" font-size="13" fill="#000" class="m" textLength="621.0" lengthAdjust="spacingAndGlyphs" xml:space="preserve"><tspan fill="#a8a8a8">&gt;&gt;&gt; </tspan><tspan fill="#2c2c2c">__objs__</tspan><tspan fill="#a8a8a8">.</tspan><tspan fill="#2c2c2c">append</tspan><tspan fill="#a8a8a8">(</tspan><tspan fill="#2c2c2c">FreeCAD</tspan><tspan fill="#a8a8a8">.</tspan><tspan fill="#2c2c2c">getDocument</tspan><tspan fill="#a8a8a8">(</tspan><tspan fill="#ff1a1a">"Unnamed"</tspan><tspan fill="#a8a8a8">).</tspan><tspan fill="#2c2c2c">getObject</tspan><tspan fill="#a8a8a8">(</tspan><tspan fill="#ff1a1a">"Part__Mirroring"</tspan><tspan fill="#a8a8a8">))</tspan></text>
<text x="233.2" y="1253.4" font-size="13" fill="#000" class="m" textLength="551.1" lengthAdjust="spacingAndGlyphs" xml:space="preserve"><tspan fill="#a8a8a8">&gt;&gt;&gt; </tspan><tspan fill="#2c2c2c">__objs__</tspan><tspan fill="#a8a8a8">.</tspan><tspan fill="#2c2c2c">append</tspan><tspan fill="#a8a8a8">(</tspan><tspan fill="#2c2c2c">FreeCAD</tspan><tspan fill="#a8a8a8">.</tspan><tspan fill="#2c2c2c">getDocument</tspan><tspan fill="#a8a8a8">(</tspan><tspan fill="#ff1a1a">"Unnamed"</tspan><tspan fill="#a8a8a8">).</tspan><tspan fill="#2c2c2c">getObject</tspan><tspan fill="#a8a8a8">(</tspan><tspan fill="#ff1a1a">"Fusion"</tspan><tspan fill="#a8a8a8">))</tspan></text>
<text x="233.2" y="1269.4" font-size="13" fill="#000" class="m" textLength="155.2" lengthAdjust="spacingAndGlyphs" xml:space="preserve"><tspan fill="#a8a8a8">&gt;&gt;&gt; </tspan><tspan fill="#0a0aff" font-weight="bold">import</tspan><tspan fill="#2c2c2c"> ImportGui</tspan></text>
<text x="233.2" y="1285.4" font-size="13" fill="#000" class="m" textLength="683.1" lengthAdjust="spacingAndGlyphs" xml:space="preserve"><tspan fill="#a8a8a8">&gt;&gt;&gt; </tspan><tspan fill="#2c2c2c">ImportGui</tspan><tspan fill="#a8a8a8">.</tspan><tspan fill="#2c2c2c">export</tspan><tspan fill="#a8a8a8">(</tspan><tspan fill="#2c2c2c">__objs__</tspan><tspan fill="#a8a8a8">,</tspan><tspan fill="#2c2c2c">u</tspan><tspan fill="#ff1a1a">"/home/thomas/Downloads/cam-mount-top-rotated-both.step"</tspan><tspan fill="#a8a8a8">)</tspan></text>
<text x="233.2" y="1301.4" font-size="13" fill="#000" class="m" textLength="31.0" lengthAdjust="spacingAndGlyphs" xml:space="preserve"><tspan fill="#a8a8a8">&gt;&gt;&gt; </tspan></text>
<text x="233.2" y="1317.4" font-size="13" fill="#000" class="m" textLength="124.2" lengthAdjust="spacingAndGlyphs" xml:space="preserve"><tspan fill="#a8a8a8">&gt;&gt;&gt; </tspan><tspan fill="#0a0aff" font-weight="bold">del</tspan><tspan fill="#2c2c2c"> __objs__</tspan></text>
<text x="233.2" y="1333.4" font-size="13" fill="#000" class="m" textLength="232.9" lengthAdjust="spacingAndGlyphs" xml:space="preserve"><tspan fill="#a8a8a8">&gt;&gt;&gt; </tspan><tspan fill="#10b010">### End command Std_Export</tspan></text>
<text x="233.2" y="1349.4" font-size="13" fill="#000" class="m" textLength="279.4" lengthAdjust="spacingAndGlyphs" xml:space="preserve"><tspan fill="#a8a8a8">&gt;&gt;&gt; </tspan><tspan fill="#10b010"># Gui.Selection.clearSelection()</tspan></text>
<text x="233.2" y="1365.4" font-size="13" fill="#000" class="m" textLength="31.0" lengthAdjust="spacingAndGlyphs" xml:space="preserve"><tspan fill="#a8a8a8">&gt;&gt;&gt; </tspan></text></g>
</svg>
</body></html>
